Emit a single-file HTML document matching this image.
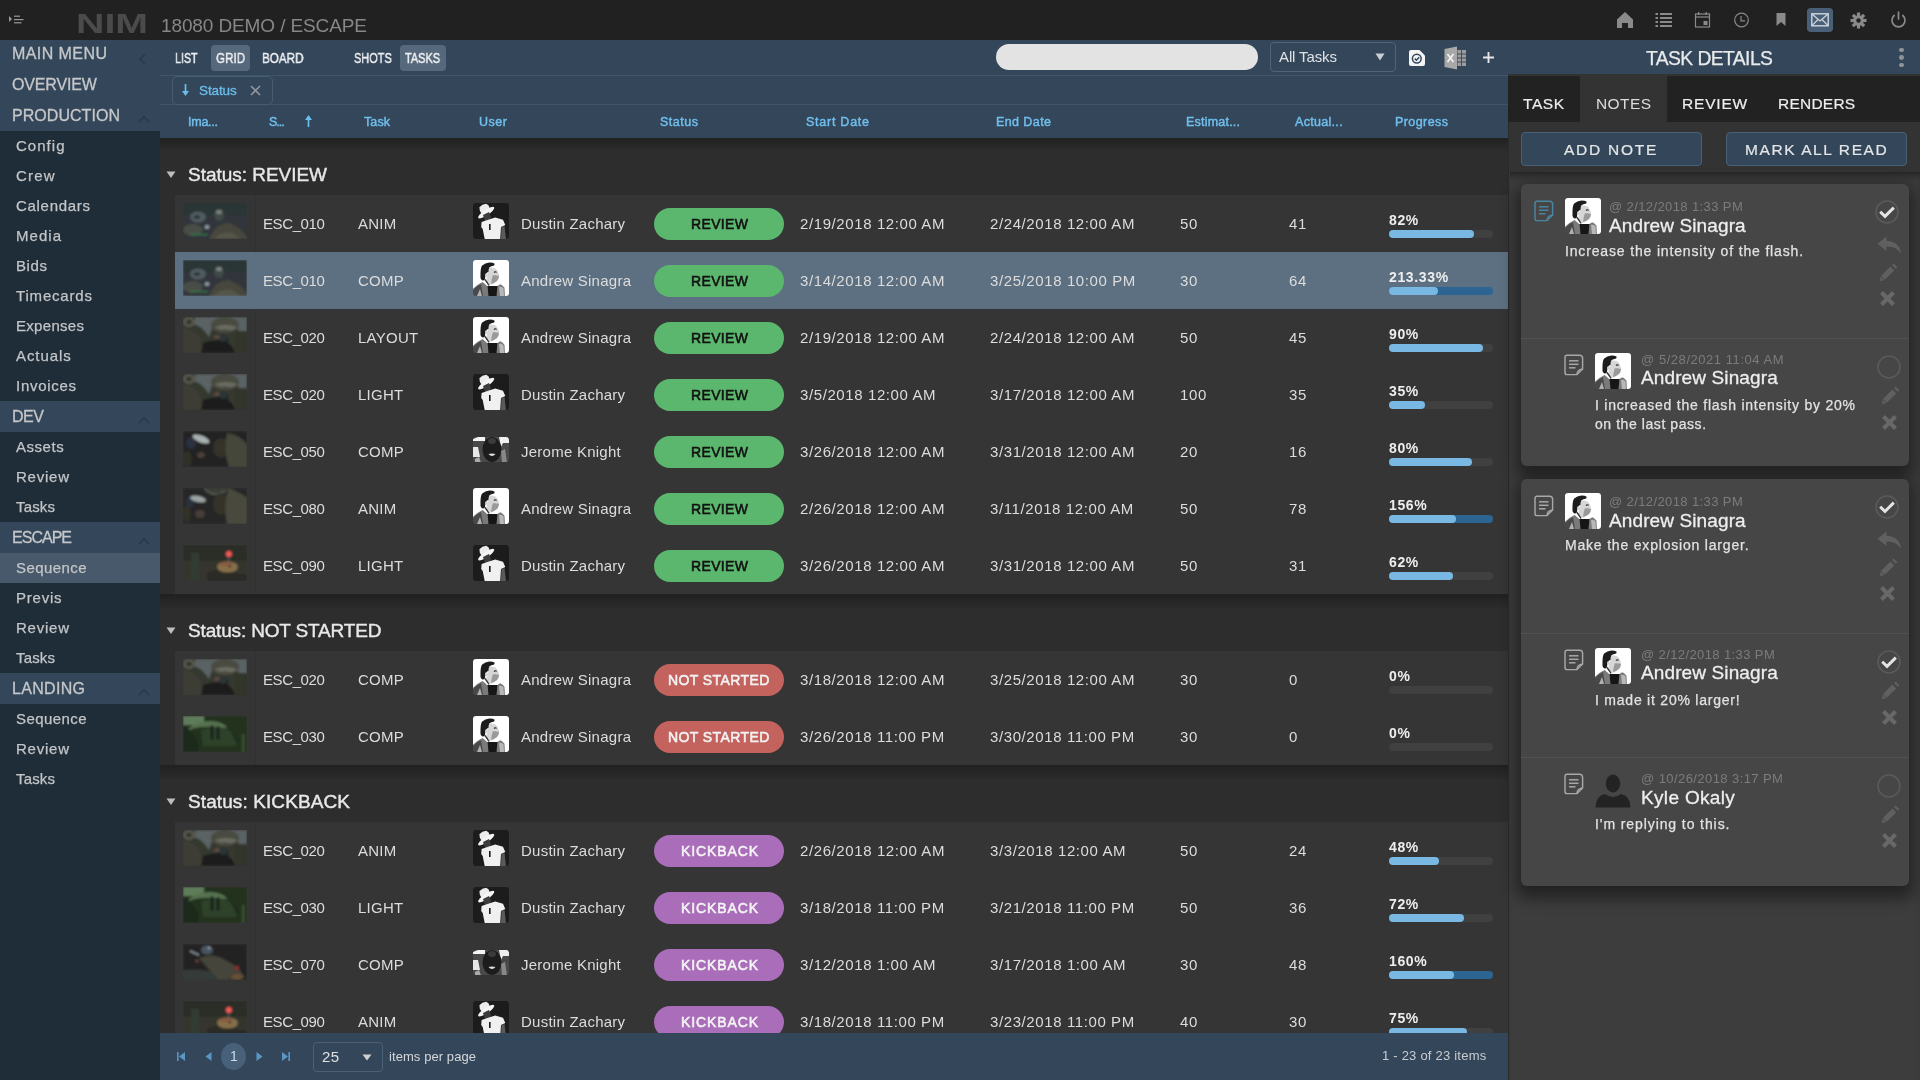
<!DOCTYPE html>
<html><head><meta charset="utf-8"><style>
html,body{margin:0;padding:0;}
body{width:1920px;height:1080px;overflow:hidden;position:relative;background:#2a2a2a;font-family:"Liberation Sans",sans-serif;}
.t{position:absolute;white-space:nowrap;will-change:transform;}
.b{position:absolute;}
</style></head><body>
<div class="b" style="left:0px;top:0px;width:1920px;height:40px;background:#212121;"></div>
<svg class="b" style="left:8px;top:14px;" width="18" height="11" viewBox="0 0 18 11"><path d="M1 2 L4 5 L1 8 Z" fill="#9a9a9a"/><rect x="6" y="1.6" width="6" height="1.2" fill="#9a9a9a"/><rect x="6" y="5" width="9.5" height="1.2" fill="#9a9a9a"/><rect x="6" y="8.2" width="7.5" height="1.2" fill="#9a9a9a"/></svg>
<div class="t" style="left:76px;top:10.2px;font-size:28px;line-height:28px;font-weight:700;color:#4b4b4b;transform-origin:0 0;transform:scale(1.405,1.0);letter-spacing:0px">NIM</div>
<div class="t" style="left:161px;top:15.80px;font-size:19px;line-height:19px;color:#878787;letter-spacing:-0.112px;">18080 DEMO / ESCAPE</div>
<svg class="b" style="left:1616px;top:11px;" width="18" height="18" viewBox="0 0 18 18"><path d="M9 1 L17 8.5 L17 17 L12 17 L12 12 L6 12 L6 17 L1 17 L1 8.5 Z" fill="#8a8a8a"/></svg>
<svg class="b" style="left:1655px;top:12px;" width="18" height="16" viewBox="0 0 18 16"><rect x="0.5" y="1" width="2.5" height="2" fill="#8a8a8a"/><rect x="5" y="1" width="12" height="2" fill="#8a8a8a"/><rect x="0.5" y="5" width="2.5" height="2" fill="#8a8a8a"/><rect x="5" y="5" width="12" height="2" fill="#8a8a8a"/><rect x="0.5" y="9" width="2.5" height="2" fill="#8a8a8a"/><rect x="5" y="9" width="12" height="2" fill="#8a8a8a"/><rect x="0.5" y="13" width="2.5" height="2" fill="#8a8a8a"/><rect x="5" y="13" width="12" height="2" fill="#8a8a8a"/></svg>
<svg class="b" style="left:1694px;top:11px;" width="17" height="17" viewBox="0 0 17 17"><rect x="1.5" y="3" width="14" height="13" fill="none" stroke="#8a8a8a" stroke-width="1.2"/><line x1="1.5" y1="6" x2="15.5" y2="6" stroke="#8a8a8a" stroke-width="1.2"/><rect x="4" y="1" width="1.3" height="3" fill="#8a8a8a"/><rect x="11.5" y="1" width="1.3" height="3" fill="#8a8a8a"/><rect x="9.5" y="10" width="4" height="4" fill="#8a8a8a"/></svg>
<svg class="b" style="left:1733px;top:12px;" width="17" height="17" viewBox="0 0 17 17"><circle cx="8.5" cy="8" r="6.8" fill="none" stroke="#8a8a8a" stroke-width="1.2"/><path d="M8 4 L8 8.8 L12 8.8" fill="none" stroke="#8a8a8a" stroke-width="1.2"/></svg>
<svg class="b" style="left:1776px;top:12px;" width="10" height="15" viewBox="0 0 10 15"><path d="M0.5 1 L9.5 1 L9.5 14 L5 10 L0.5 14 Z" fill="#8a8a8a"/></svg>
<div class="b" style="left:1807px;top:8px;width:26px;height:24px;background:#4a6078;border-radius:4px;"></div>
<svg class="b" style="left:1811px;top:13px;" width="18" height="14" viewBox="0 0 18 14"><rect x="0.8" y="0.8" width="16.4" height="12" fill="none" stroke="#d0d6dc" stroke-width="1.4"/><path d="M1 1 L9 8 L17 1 M1 12.6 L7 6.5 M17 12.6 L11 6.5" fill="none" stroke="#d0d6dc" stroke-width="1.2"/></svg>
<svg class="b" style="left:1850px;top:12px;" width="17" height="17" viewBox="0 0 17 17"><g transform="translate(8.5 8.5)"><circle r="5.2" fill="#8a8a8a"/><rect x="-1.6" y="-8" width="3.2" height="4" fill="#8a8a8a" transform="rotate(0)"/><rect x="-1.6" y="-8" width="3.2" height="4" fill="#8a8a8a" transform="rotate(45)"/><rect x="-1.6" y="-8" width="3.2" height="4" fill="#8a8a8a" transform="rotate(90)"/><rect x="-1.6" y="-8" width="3.2" height="4" fill="#8a8a8a" transform="rotate(135)"/><rect x="-1.6" y="-8" width="3.2" height="4" fill="#8a8a8a" transform="rotate(180)"/><rect x="-1.6" y="-8" width="3.2" height="4" fill="#8a8a8a" transform="rotate(225)"/><rect x="-1.6" y="-8" width="3.2" height="4" fill="#8a8a8a" transform="rotate(270)"/><rect x="-1.6" y="-8" width="3.2" height="4" fill="#8a8a8a" transform="rotate(315)"/><circle r="2.2" fill="#212121"/></g></svg>
<svg class="b" style="left:1890px;top:11px;" width="17" height="18" viewBox="0 0 17 18"><path d="M4.2 4.5 A6.5 6.5 0 1 0 12.8 4.5" fill="none" stroke="#8a8a8a" stroke-width="1.7" stroke-linecap="round"/><line x1="8.5" y1="1" x2="8.5" y2="8" stroke="#8a8a8a" stroke-width="1.7" stroke-linecap="round"/></svg>
<div class="b" style="left:0px;top:40px;width:160px;height:1040px;background:#1f2d39;"></div>
<div class="b" style="left:0px;top:40px;width:160px;height:30px;background:#34475a;"></div>
<div class="t" style="left:12px;top:46.07px;font-size:16px;line-height:16px;color:#c5c7c9;letter-spacing:0.426px;-webkit-text-stroke:0.3px #c5c7c9;">MAIN MENU</div>
<svg class="b" style="left:138px;top:53px;" width="9" height="12" viewBox="0 0 9 12"><path d="M7 1 L2 6 L7 11" fill="none" stroke="#283a4a" stroke-width="1.6"/></svg>
<div class="b" style="left:0px;top:70px;width:160px;height:30px;background:#34475a;"></div>
<div class="t" style="left:12px;top:77.07px;font-size:16px;line-height:16px;color:#c5c7c9;letter-spacing:-0.141px;-webkit-text-stroke:0.3px #c5c7c9;">OVERVIEW</div>
<div class="b" style="left:0px;top:100px;width:160px;height:31px;background:#34475a;"></div>
<div class="t" style="left:12px;top:108.27px;font-size:16px;line-height:16px;color:#c5c7c9;letter-spacing:0.042px;-webkit-text-stroke:0.3px #c5c7c9;">PRODUCTION</div>
<svg class="b" style="left:138px;top:115px;" width="12" height="8" viewBox="0 0 12 8"><path d="M1 7 L6 2 L11 7" fill="none" stroke="#283a4a" stroke-width="1.6"/></svg>
<div class="b" style="left:0px;top:401px;width:160px;height:31px;background:#34475a;"></div>
<div class="t" style="left:12px;top:409.47px;font-size:16px;line-height:16px;color:#c5c7c9;letter-spacing:-0.453px;-webkit-text-stroke:0.3px #c5c7c9;">DEV</div>
<svg class="b" style="left:138px;top:416px;" width="12" height="8" viewBox="0 0 12 8"><path d="M1 7 L6 2 L11 7" fill="none" stroke="#283a4a" stroke-width="1.6"/></svg>
<div class="b" style="left:0px;top:522px;width:160px;height:31px;background:#34475a;"></div>
<div class="t" style="left:12px;top:530.47px;font-size:16px;line-height:16px;color:#c5c7c9;letter-spacing:-0.984px;-webkit-text-stroke:0.3px #c5c7c9;">ESCAPE</div>
<svg class="b" style="left:138px;top:537px;" width="12" height="8" viewBox="0 0 12 8"><path d="M1 7 L6 2 L11 7" fill="none" stroke="#283a4a" stroke-width="1.6"/></svg>
<div class="b" style="left:0px;top:673px;width:160px;height:31px;background:#34475a;"></div>
<div class="t" style="left:12px;top:681.47px;font-size:16px;line-height:16px;color:#c5c7c9;letter-spacing:0.305px;-webkit-text-stroke:0.3px #c5c7c9;">LANDING</div>
<svg class="b" style="left:138px;top:688px;" width="12" height="8" viewBox="0 0 12 8"><path d="M1 7 L6 2 L11 7" fill="none" stroke="#283a4a" stroke-width="1.6"/></svg>
<div class="t" style="left:16px;top:138.13px;font-size:15px;line-height:15px;color:#c3c5c7;letter-spacing:1.028px;-webkit-text-stroke:0.25px #c3c5c7;">Config</div>
<div class="t" style="left:16px;top:168.13px;font-size:15px;line-height:15px;color:#c3c5c7;letter-spacing:1.167px;-webkit-text-stroke:0.25px #c3c5c7;">Crew</div>
<div class="t" style="left:16px;top:198.13px;font-size:15px;line-height:15px;color:#c3c5c7;letter-spacing:0.703px;-webkit-text-stroke:0.25px #c3c5c7;">Calendars</div>
<div class="t" style="left:16px;top:228.13px;font-size:15px;line-height:15px;color:#c3c5c7;letter-spacing:1.035px;-webkit-text-stroke:0.25px #c3c5c7;">Media</div>
<div class="t" style="left:16px;top:258.13px;font-size:15px;line-height:15px;color:#c3c5c7;letter-spacing:0.609px;-webkit-text-stroke:0.25px #c3c5c7;">Bids</div>
<div class="t" style="left:16px;top:288.13px;font-size:15px;line-height:15px;color:#c3c5c7;letter-spacing:0.818px;-webkit-text-stroke:0.25px #c3c5c7;">Timecards</div>
<div class="t" style="left:16px;top:318.13px;font-size:15px;line-height:15px;color:#c3c5c7;letter-spacing:0.304px;-webkit-text-stroke:0.25px #c3c5c7;">Expenses</div>
<div class="t" style="left:16px;top:348.13px;font-size:15px;line-height:15px;color:#c3c5c7;letter-spacing:0.919px;-webkit-text-stroke:0.25px #c3c5c7;">Actuals</div>
<div class="t" style="left:16px;top:378.13px;font-size:15px;line-height:15px;color:#c3c5c7;letter-spacing:0.710px;-webkit-text-stroke:0.25px #c3c5c7;">Invoices</div>
<div class="t" style="left:16px;top:439.13px;font-size:15px;line-height:15px;color:#c3c5c7;letter-spacing:0.537px;-webkit-text-stroke:0.25px #c3c5c7;">Assets</div>
<div class="t" style="left:16px;top:469.13px;font-size:15px;line-height:15px;color:#c3c5c7;letter-spacing:0.766px;-webkit-text-stroke:0.25px #c3c5c7;">Review</div>
<div class="t" style="left:16px;top:499.13px;font-size:15px;line-height:15px;color:#c3c5c7;letter-spacing:0.164px;-webkit-text-stroke:0.25px #c3c5c7;">Tasks</div>
<div class="b" style="left:0px;top:553px;width:160px;height:30px;background:#47596b;"></div>
<div class="t" style="left:16px;top:560.13px;font-size:15px;line-height:15px;color:#c3c5c7;letter-spacing:0.420px;-webkit-text-stroke:0.25px #c3c5c7;">Sequence</div>
<div class="t" style="left:16px;top:590.13px;font-size:15px;line-height:15px;color:#c3c5c7;letter-spacing:0.766px;-webkit-text-stroke:0.25px #c3c5c7;">Previs</div>
<div class="t" style="left:16px;top:620.13px;font-size:15px;line-height:15px;color:#c3c5c7;letter-spacing:0.766px;-webkit-text-stroke:0.25px #c3c5c7;">Review</div>
<div class="t" style="left:16px;top:650.13px;font-size:15px;line-height:15px;color:#c3c5c7;letter-spacing:0.164px;-webkit-text-stroke:0.25px #c3c5c7;">Tasks</div>
<div class="t" style="left:16px;top:711.13px;font-size:15px;line-height:15px;color:#c3c5c7;letter-spacing:0.420px;-webkit-text-stroke:0.25px #c3c5c7;">Sequence</div>
<div class="t" style="left:16px;top:741.13px;font-size:15px;line-height:15px;color:#c3c5c7;letter-spacing:0.766px;-webkit-text-stroke:0.25px #c3c5c7;">Review</div>
<div class="t" style="left:16px;top:771.13px;font-size:15px;line-height:15px;color:#c3c5c7;letter-spacing:0.164px;-webkit-text-stroke:0.25px #c3c5c7;">Tasks</div>
<div class="b" style="left:160px;top:40px;width:1348px;height:98px;background:#34475a;"></div>
<div class="b" style="left:160px;top:75px;width:1348px;height:1px;background:#3f5669;"></div>
<div class="b" style="left:160px;top:104px;width:1348px;height:1px;background:#3f5669;"></div>
<div class="t" style="left:175px;top:51.49px;font-size:14px;line-height:14px;color:#eef0f2;-webkit-text-stroke:0.45px #eef0f2;transform-origin:0 0;transform:scaleX(0.761)">LIST</div>
<div class="b" style="left:211px;top:45px;width:39px;height:26px;background:#56687b;border-radius:4px;"></div>
<div class="t" style="left:215.5px;top:51.49px;font-size:14px;line-height:14px;color:#eef0f2;-webkit-text-stroke:0.45px #eef0f2;transform-origin:0 0;transform:scaleX(0.829)">GRID</div>
<div class="t" style="left:261.7px;top:51.49px;font-size:14px;line-height:14px;color:#eef0f2;-webkit-text-stroke:0.45px #eef0f2;transform-origin:0 0;transform:scaleX(0.833)">BOARD</div>
<div class="t" style="left:353.5px;top:51.49px;font-size:14px;line-height:14px;color:#eef0f2;-webkit-text-stroke:0.45px #eef0f2;transform-origin:0 0;transform:scaleX(0.782)">SHOTS</div>
<div class="b" style="left:400px;top:45px;width:46px;height:26px;background:#56687b;border-radius:4px;"></div>
<div class="t" style="left:405.3px;top:51.49px;font-size:14px;line-height:14px;color:#eef0f2;-webkit-text-stroke:0.45px #eef0f2;transform-origin:0 0;transform:scaleX(0.782)">TASKS</div>
<div class="b" style="left:996px;top:44px;width:262px;height:26px;background:#e3e3e3;border-radius:13px;"></div>
<div class="b" style="left:1270px;top:42px;width:126px;height:30px;background:transparent;border:1px solid #506478;border-radius:4px;box-sizing:border-box;"></div>
<div class="t" style="left:1279px;top:49.13px;font-size:15px;line-height:15px;color:#dfe2e5;letter-spacing:-0.113px;">All Tasks</div>
<svg class="b" style="left:1375px;top:53px;" width="10" height="8" viewBox="0 0 10 8"><path d="M0.5 0.5 L9.5 0.5 L5 7.5 Z" fill="#c8cdd2"/></svg>
<svg class="b" style="left:1409px;top:50px;" width="16" height="16" viewBox="0 0 16 16"><path d="M2 0 L10.5 0 L16 5.5 L16 14 Q16 16 14 16 L2 16 Q0 16 0 14 L0 2 Q0 0 2 0 Z" fill="#f4f4f4"/><circle cx="7.8" cy="8.6" r="4.4" fill="none" stroke="#34475a" stroke-width="1.5"/><path d="M5.8 8.6 L7.4 10.2 L10.2 7.2" fill="none" stroke="#34475a" stroke-width="1.5"/></svg>
<svg class="b" style="left:1444px;top:46px;" width="23" height="24" viewBox="0 0 23 24"><rect x="9" y="4" width="13" height="16" fill="#9c9c9c"/><g stroke="#34475a" stroke-width="0.9"><line x1="13" y1="4" x2="13" y2="20"/><line x1="17.5" y1="4" x2="17.5" y2="20"/><line x1="9" y1="8" x2="22" y2="8"/><line x1="9" y1="12" x2="22" y2="12"/><line x1="9" y1="16" x2="22" y2="16"/></g><path d="M0.5 3 L13 0.5 L13 23.5 L0.5 21 Z" fill="#a8a8a8"/><path d="M3.5 8 L9.5 16 M9.5 8 L3.5 16" stroke="#f0f0f0" stroke-width="1.8"/></svg>
<svg class="b" style="left:1483px;top:52px;" width="11" height="11" viewBox="0 0 11 11"><path d="M5.5 0 L5.5 11 M0 5.5 L11 5.5" stroke="#e6e6e6" stroke-width="1.9"/></svg>
<div class="b" style="left:172px;top:76px;width:101px;height:29px;background:transparent;border:1px solid #465c70;border-radius:5px;box-sizing:border-box;"></div>
<svg class="b" style="left:181px;top:83px;" width="9" height="14" viewBox="0 0 9 14"><path d="M4.5 1 L4.5 9" stroke="#6abdec" stroke-width="1.7"/><path d="M1 8 L8 8 L4.5 13 Z" fill="#6abdec"/></svg>
<div class="t" style="left:199px;top:84.07px;font-size:13.5px;line-height:13.5px;color:#6abdec;letter-spacing:-0.116px;-webkit-text-stroke:0.3px #6abdec;">Status</div>
<svg class="b" style="left:250px;top:85px;" width="11" height="11" viewBox="0 0 11 11"><path d="M1 1 L10 10 M10 1 L1 10" stroke="#8e959c" stroke-width="1.6"/></svg>
<div class="t" style="left:187.5px;top:116.33px;font-size:12.5px;line-height:12.5px;color:#70bfee;letter-spacing:-0.247px;-webkit-text-stroke:0.45px #70bfee;">Ima...</div>
<div class="t" style="left:269px;top:116.33px;font-size:12.5px;line-height:12.5px;color:#70bfee;letter-spacing:-1.017px;-webkit-text-stroke:0.45px #70bfee;">S...</div>
<div class="t" style="left:364px;top:116.33px;font-size:12.5px;line-height:12.5px;color:#70bfee;letter-spacing:0.099px;-webkit-text-stroke:0.45px #70bfee;">Task</div>
<div class="t" style="left:479px;top:116.33px;font-size:12.5px;line-height:12.5px;color:#70bfee;letter-spacing:0.536px;-webkit-text-stroke:0.45px #70bfee;">User</div>
<div class="t" style="left:660px;top:116.33px;font-size:12.5px;line-height:12.5px;color:#70bfee;letter-spacing:0.512px;-webkit-text-stroke:0.45px #70bfee;">Status</div>
<div class="t" style="left:806px;top:116.33px;font-size:12.5px;line-height:12.5px;color:#70bfee;letter-spacing:0.748px;-webkit-text-stroke:0.45px #70bfee;">Start Date</div>
<div class="t" style="left:996px;top:116.33px;font-size:12.5px;line-height:12.5px;color:#70bfee;letter-spacing:0.411px;-webkit-text-stroke:0.45px #70bfee;">End Date</div>
<div class="t" style="left:1186px;top:116.33px;font-size:12.5px;line-height:12.5px;color:#70bfee;letter-spacing:0.214px;-webkit-text-stroke:0.45px #70bfee;">Estimat...</div>
<div class="t" style="left:1294.7px;top:116.33px;font-size:12.5px;line-height:12.5px;color:#70bfee;letter-spacing:0.305px;-webkit-text-stroke:0.45px #70bfee;">Actual...</div>
<div class="t" style="left:1395px;top:116.33px;font-size:12.5px;line-height:12.5px;color:#70bfee;letter-spacing:0.426px;-webkit-text-stroke:0.45px #70bfee;">Progress</div>
<svg class="b" style="left:304px;top:115px;" width="9" height="13" viewBox="0 0 9 13"><path d="M4.5 12 L4.5 4" stroke="#6abdec" stroke-width="1.7"/><path d="M1 5 L8 5 L4.5 0 Z" fill="#6abdec"/></svg>
<div class="b" style="left:160px;top:138px;width:1348px;height:895px;background:#2d2d2d;"></div>
<div class="b" style="left:160px;top:138px;width:1348px;height:14px;background:linear-gradient(#212121,rgba(45,45,45,0));"></div>
<svg class="b" style="left:166px;top:171px;" width="10" height="8" viewBox="0 0 10 8"><path d="M0.5 0.5 L9.5 0.5 L5 7 Z" fill="#bdbdbd"/></svg>
<div class="t" style="left:188px;top:165.00px;font-size:19px;line-height:19px;color:#e8e8e8;letter-spacing:-0.029px;-webkit-text-stroke:0.4px #e8e8e8;">Status: REVIEW</div>
<div class="b" style="left:175px;top:195px;width:1333px;height:57px;background:#353535;"></div>
<div class="b" style="left:255px;top:195px;width:1px;height:57px;background:#313131;"></div>
<svg class="b" style="left:183px;top:203px;" width="64" height="36" viewBox="0 0 64 36"><defs><filter id="bl1" x="0" y="0" width="1" height="1"><feGaussianBlur stdDeviation="0.9"/></filter></defs><g filter="url(#bl1)"><rect width="64" height="36" fill="#30363a"/><rect width="64" height="12" fill="#2c3435"/><ellipse cx="15" cy="14" rx="8" ry="5.5" fill="#4f5c60"/><ellipse cx="14" cy="14" rx="3" ry="1.5" fill="#222a2c"/><ellipse cx="36" cy="12" rx="5" ry="6" fill="#3f4846"/><ellipse cx="36" cy="9" rx="3" ry="2" fill="#7a8482"/><ellipse cx="10" cy="27" rx="10" ry="6" fill="#4a4d46"/><path d="M26 36 Q32 20 46 20 Q58 24 64 34 L64 36 Z" fill="#46463c"/><path d="M30 36 Q38 28 50 30 L58 36 Z" fill="#55554a"/><ellipse cx="24" cy="24" rx="2.5" ry="2" fill="#8a9aa0"/><rect x="7" y="31" width="18" height="1.2" fill="#2a7a4a"/></g></svg>
<div class="t" style="left:263px;top:216.43px;font-size:15px;line-height:15px;color:#dcdcdc;letter-spacing:-0.4px;">ESC_010</div>
<div class="t" style="left:358px;top:216.43px;font-size:15px;line-height:15px;color:#dcdcdc;letter-spacing:0.25px;">ANIM</div>
<svg class="b" style="left:473px;top:203px;border-radius:3px;overflow:hidden" width="36" height="36" viewBox="0 0 36 36"><defs><filter id="av1"><feGaussianBlur stdDeviation="0.35"/></filter></defs><g filter="url(#av1)"><rect width="36" height="36" fill="#1c1c1c"/><path d="M6.4 4.2 Q9 1.2 13.2 0.8 Q16 2 16.6 4.8 L15.4 8.6 L8.6 10.6 Q6.2 7.5 6.4 4.2 Z" fill="#ececec"/><ellipse cx="13.2" cy="9.6" rx="9.6" ry="2.7" fill="#f4f4f4" transform="rotate(-34 13.2 9.6)"/><path d="M10 12 L16 9 L18 14 L16 19 L12 18 Z" fill="#3c3c3c"/><path d="M8.6 19 L15.2 16.7 L22.2 14.4 L30 16.7 L32.3 22.1 L28 24.1 L27.2 36 L11.7 36 L9.7 26 L8.2 24.1 Z" fill="#f0f0f0"/><rect x="16" y="21" width="1.6" height="6" fill="#1a1a1a"/><path d="M28.5 24 L31.5 23 L33 36 L28 36 Z" fill="#5a5a5a"/></g></svg>
<div class="t" style="left:521px;top:216.43px;font-size:15px;line-height:15px;color:#dcdcdc;letter-spacing:0.25px;">Dustin Zachary</div>
<div class="b" style="left:654px;top:208px;width:130px;height:32px;background:#5bb66e;border-radius:16px;"></div>
<div class="t" style="left:690.5px;top:216.99px;font-size:14px;line-height:14px;color:#111111;letter-spacing:0.350px;-webkit-text-stroke:0.55px #111111;">REVIEW</div>
<div class="t" style="left:800px;top:216.43px;font-size:15px;line-height:15px;color:#dcdcdc;letter-spacing:0.6px;">2/19/2018 12:00 AM</div>
<div class="t" style="left:990px;top:216.43px;font-size:15px;line-height:15px;color:#dcdcdc;letter-spacing:0.6px;">2/24/2018 12:00 AM</div>
<div class="t" style="left:1179.8px;top:216.43px;font-size:15px;line-height:15px;color:#dcdcdc;letter-spacing:0.6px;">50</div>
<div class="t" style="left:1288.8px;top:216.43px;font-size:15px;line-height:15px;color:#dcdcdc;letter-spacing:0.6px;">41</div>
<div class="t" style="left:1389px;top:212.79px;font-size:14px;line-height:14px;color:#eeeeee;font-weight:700;letter-spacing:0.65px;">82%</div>
<div class="b" style="left:1389px;top:230px;width:104px;height:8px;background:#404040;border-radius:4px;"></div>
<div class="b" style="left:1389px;top:230px;width:85px;height:8px;background:#79b8e2;border-radius:4px;"></div>
<div class="b" style="left:175px;top:252px;width:1333px;height:57px;background:#5d7082;"></div>
<svg class="b" style="left:183px;top:260px;" width="64" height="36" viewBox="0 0 64 36"><defs><filter id="bl2" x="0" y="0" width="1" height="1"><feGaussianBlur stdDeviation="0.9"/></filter></defs><g filter="url(#bl2)"><rect width="64" height="36" fill="#30363a"/><rect width="64" height="12" fill="#2c3435"/><ellipse cx="15" cy="14" rx="8" ry="5.5" fill="#4f5c60"/><ellipse cx="14" cy="14" rx="3" ry="1.5" fill="#222a2c"/><ellipse cx="36" cy="12" rx="5" ry="6" fill="#3f4846"/><ellipse cx="36" cy="9" rx="3" ry="2" fill="#7a8482"/><ellipse cx="10" cy="27" rx="10" ry="6" fill="#4a4d46"/><path d="M26 36 Q32 20 46 20 Q58 24 64 34 L64 36 Z" fill="#46463c"/><path d="M30 36 Q38 28 50 30 L58 36 Z" fill="#55554a"/><ellipse cx="24" cy="24" rx="2.5" ry="2" fill="#8a9aa0"/><rect x="7" y="31" width="18" height="1.2" fill="#2a7a4a"/></g></svg>
<div class="t" style="left:263px;top:273.43px;font-size:15px;line-height:15px;color:#dcdcdc;letter-spacing:-0.4px;">ESC_010</div>
<div class="t" style="left:358px;top:273.43px;font-size:15px;line-height:15px;color:#dcdcdc;letter-spacing:0.25px;">COMP</div>
<svg class="b" style="left:473px;top:260px;border-radius:3px;overflow:hidden" width="36" height="36" viewBox="0 0 36 36"><defs><filter id="av2"><feGaussianBlur stdDeviation="0.35"/></filter></defs><g filter="url(#av2)"><rect width="36" height="36" fill="#ffffff"/><path d="M16.4 7.3 Q21 7.5 23 8.7 Q25.5 12 26.2 15.3 Q26 17.5 25.3 18.9 Q24 21 21.7 22.4 Q19 24.5 16.4 25.1 Q13.5 23.5 12.8 21.6 Z" fill="#d6d6d6"/><path d="M19.9 15.3 Q23 14.8 26 16 Q25.8 19 24 21 Q21 23.5 18 24 Q18.5 19 19.9 15.3 Z" fill="#9a9a9a"/><path d="M21 12.5 Q22.5 11 23.5 12.5" fill="none" stroke="#222" stroke-width="1.2"/><path d="M7.5 12.7 Q7.8 7 9.2 5.6 Q12 2.6 16.4 2.4 Q20 2.4 21.7 3.8 L21.2 5.6 Q18 6.2 16.4 7.3 Q15.3 9.5 15.5 11.8 Q13.5 12.5 12.8 14.4 Q12.2 16.5 11.9 18.9 L10.1 20.7 Q8 20 7.5 18 Z" fill="#1c1c1c"/><ellipse cx="13.3" cy="15" rx="1.3" ry="1.8" fill="#cfcfcf"/><path d="M11.5 19 Q14 22 16 25.5" fill="none" stroke="#333" stroke-width="1.3"/><path d="M0 28.7 Q5 24 9.6 22 Q12 24 14.1 26 L24.4 26 Q26 25 27.5 24.2 Q30 25.5 31.5 27.8 L31.9 36 L0 36 Z" fill="#7a7a7a"/><path d="M0 30 Q4 26 8 24 L10 36 L0 36 Z" fill="#4a4a4a"/><path d="M4 36 L7 29 L9 36 Z" fill="#b0b0b0"/><path d="M26 27 Q29 26 30.5 28.5 L31 36 L27 36 Z" fill="#b8b8b8"/><path d="M14.6 26 L24.4 26 L23.5 36 L15.5 36 Z" fill="#141414"/></g></svg>
<div class="t" style="left:521px;top:273.43px;font-size:15px;line-height:15px;color:#dcdcdc;letter-spacing:0.25px;">Andrew Sinagra</div>
<div class="b" style="left:654px;top:265px;width:130px;height:32px;background:#5bb66e;border-radius:16px;"></div>
<div class="t" style="left:690.5px;top:273.99px;font-size:14px;line-height:14px;color:#111111;letter-spacing:0.350px;-webkit-text-stroke:0.55px #111111;">REVIEW</div>
<div class="t" style="left:800px;top:273.43px;font-size:15px;line-height:15px;color:#dcdcdc;letter-spacing:0.6px;">3/14/2018 12:00 AM</div>
<div class="t" style="left:990px;top:273.43px;font-size:15px;line-height:15px;color:#dcdcdc;letter-spacing:0.6px;">3/25/2018 10:00 PM</div>
<div class="t" style="left:1179.8px;top:273.43px;font-size:15px;line-height:15px;color:#dcdcdc;letter-spacing:0.6px;">30</div>
<div class="t" style="left:1288.8px;top:273.43px;font-size:15px;line-height:15px;color:#dcdcdc;letter-spacing:0.6px;">64</div>
<div class="t" style="left:1389px;top:269.79px;font-size:14px;line-height:14px;color:#eeeeee;font-weight:700;letter-spacing:0.65px;">213.33%</div>
<div class="b" style="left:1389px;top:287px;width:104px;height:8px;background:#2c6592;border-radius:4px;"></div>
<div class="b" style="left:1389px;top:287px;width:49px;height:8px;background:#79b8e2;border-radius:4px;"></div>
<div class="b" style="left:175px;top:309px;width:1333px;height:57px;background:#353535;"></div>
<div class="b" style="left:255px;top:309px;width:1px;height:57px;background:#313131;"></div>
<svg class="b" style="left:183px;top:317px;" width="64" height="36" viewBox="0 0 64 36"><defs><filter id="bl3" x="0" y="0" width="1" height="1"><feGaussianBlur stdDeviation="0.9"/></filter></defs><g filter="url(#bl3)"><rect width="64" height="36" fill="#36372f"/><path d="M12 0 L64 0 L64 14 L56 14 Q48 2 36 4 Q30 6 28 14 L26 20 Q18 8 12 8 Z" fill="#5a6264"/><ellipse cx="42" cy="8" rx="14" ry="8" fill="#4a4b40"/><path d="M32 10 Q42 6 54 10 Q50 15 42 12 Q36 14 32 10 Z" fill="#6a6c62"/><ellipse cx="6" cy="5" rx="6" ry="5" fill="#5a5a50"/><ellipse cx="6" cy="5" rx="3" ry="2.5" fill="#34352e"/><path d="M0 10 Q10 12 18 22 L20 36 L0 36 Z" fill="#3c3d34"/><path d="M18 36 L20 26 Q30 22 42 24 Q50 28 52 36 Z" fill="#1e1e1e"/><circle cx="40" cy="23" r="5" fill="#1a1c1e"/><circle cx="40" cy="21" r="4" fill="#2a3434"/><ellipse cx="34" cy="20" rx="3" ry="2" fill="#5a4a40"/><path d="M52 14 Q62 14 64 16 L64 36 L52 36 Z" fill="#33342c"/></g></svg>
<div class="t" style="left:263px;top:330.43px;font-size:15px;line-height:15px;color:#dcdcdc;letter-spacing:-0.4px;">ESC_020</div>
<div class="t" style="left:358px;top:330.43px;font-size:15px;line-height:15px;color:#dcdcdc;letter-spacing:0.25px;">LAYOUT</div>
<svg class="b" style="left:473px;top:317px;border-radius:3px;overflow:hidden" width="36" height="36" viewBox="0 0 36 36"><defs><filter id="av3"><feGaussianBlur stdDeviation="0.35"/></filter></defs><g filter="url(#av3)"><rect width="36" height="36" fill="#ffffff"/><path d="M16.4 7.3 Q21 7.5 23 8.7 Q25.5 12 26.2 15.3 Q26 17.5 25.3 18.9 Q24 21 21.7 22.4 Q19 24.5 16.4 25.1 Q13.5 23.5 12.8 21.6 Z" fill="#d6d6d6"/><path d="M19.9 15.3 Q23 14.8 26 16 Q25.8 19 24 21 Q21 23.5 18 24 Q18.5 19 19.9 15.3 Z" fill="#9a9a9a"/><path d="M21 12.5 Q22.5 11 23.5 12.5" fill="none" stroke="#222" stroke-width="1.2"/><path d="M7.5 12.7 Q7.8 7 9.2 5.6 Q12 2.6 16.4 2.4 Q20 2.4 21.7 3.8 L21.2 5.6 Q18 6.2 16.4 7.3 Q15.3 9.5 15.5 11.8 Q13.5 12.5 12.8 14.4 Q12.2 16.5 11.9 18.9 L10.1 20.7 Q8 20 7.5 18 Z" fill="#1c1c1c"/><ellipse cx="13.3" cy="15" rx="1.3" ry="1.8" fill="#cfcfcf"/><path d="M11.5 19 Q14 22 16 25.5" fill="none" stroke="#333" stroke-width="1.3"/><path d="M0 28.7 Q5 24 9.6 22 Q12 24 14.1 26 L24.4 26 Q26 25 27.5 24.2 Q30 25.5 31.5 27.8 L31.9 36 L0 36 Z" fill="#7a7a7a"/><path d="M0 30 Q4 26 8 24 L10 36 L0 36 Z" fill="#4a4a4a"/><path d="M4 36 L7 29 L9 36 Z" fill="#b0b0b0"/><path d="M26 27 Q29 26 30.5 28.5 L31 36 L27 36 Z" fill="#b8b8b8"/><path d="M14.6 26 L24.4 26 L23.5 36 L15.5 36 Z" fill="#141414"/></g></svg>
<div class="t" style="left:521px;top:330.43px;font-size:15px;line-height:15px;color:#dcdcdc;letter-spacing:0.25px;">Andrew Sinagra</div>
<div class="b" style="left:654px;top:322px;width:130px;height:32px;background:#5bb66e;border-radius:16px;"></div>
<div class="t" style="left:690.5px;top:330.99px;font-size:14px;line-height:14px;color:#111111;letter-spacing:0.350px;-webkit-text-stroke:0.55px #111111;">REVIEW</div>
<div class="t" style="left:800px;top:330.43px;font-size:15px;line-height:15px;color:#dcdcdc;letter-spacing:0.6px;">2/19/2018 12:00 AM</div>
<div class="t" style="left:990px;top:330.43px;font-size:15px;line-height:15px;color:#dcdcdc;letter-spacing:0.6px;">2/24/2018 12:00 AM</div>
<div class="t" style="left:1179.8px;top:330.43px;font-size:15px;line-height:15px;color:#dcdcdc;letter-spacing:0.6px;">50</div>
<div class="t" style="left:1288.8px;top:330.43px;font-size:15px;line-height:15px;color:#dcdcdc;letter-spacing:0.6px;">45</div>
<div class="t" style="left:1389px;top:326.79px;font-size:14px;line-height:14px;color:#eeeeee;font-weight:700;letter-spacing:0.65px;">90%</div>
<div class="b" style="left:1389px;top:344px;width:104px;height:8px;background:#404040;border-radius:4px;"></div>
<div class="b" style="left:1389px;top:344px;width:94px;height:8px;background:#79b8e2;border-radius:4px;"></div>
<div class="b" style="left:175px;top:366px;width:1333px;height:57px;background:#353535;"></div>
<div class="b" style="left:255px;top:366px;width:1px;height:57px;background:#313131;"></div>
<svg class="b" style="left:183px;top:374px;" width="64" height="36" viewBox="0 0 64 36"><defs><filter id="bl4" x="0" y="0" width="1" height="1"><feGaussianBlur stdDeviation="0.9"/></filter></defs><g filter="url(#bl4)"><rect width="64" height="36" fill="#36372f"/><path d="M12 0 L64 0 L64 14 L56 14 Q48 2 36 4 Q30 6 28 14 L26 20 Q18 8 12 8 Z" fill="#5a6264"/><ellipse cx="42" cy="8" rx="14" ry="8" fill="#4a4b40"/><path d="M32 10 Q42 6 54 10 Q50 15 42 12 Q36 14 32 10 Z" fill="#6a6c62"/><ellipse cx="6" cy="5" rx="6" ry="5" fill="#5a5a50"/><ellipse cx="6" cy="5" rx="3" ry="2.5" fill="#34352e"/><path d="M0 10 Q10 12 18 22 L20 36 L0 36 Z" fill="#3c3d34"/><path d="M18 36 L20 26 Q30 22 42 24 Q50 28 52 36 Z" fill="#1e1e1e"/><circle cx="40" cy="23" r="5" fill="#1a1c1e"/><circle cx="40" cy="21" r="4" fill="#2a3434"/><ellipse cx="34" cy="20" rx="3" ry="2" fill="#5a4a40"/><path d="M52 14 Q62 14 64 16 L64 36 L52 36 Z" fill="#33342c"/></g></svg>
<div class="t" style="left:263px;top:387.43px;font-size:15px;line-height:15px;color:#dcdcdc;letter-spacing:-0.4px;">ESC_020</div>
<div class="t" style="left:358px;top:387.43px;font-size:15px;line-height:15px;color:#dcdcdc;letter-spacing:0.25px;">LIGHT</div>
<svg class="b" style="left:473px;top:374px;border-radius:3px;overflow:hidden" width="36" height="36" viewBox="0 0 36 36"><defs><filter id="av4"><feGaussianBlur stdDeviation="0.35"/></filter></defs><g filter="url(#av4)"><rect width="36" height="36" fill="#1c1c1c"/><path d="M6.4 4.2 Q9 1.2 13.2 0.8 Q16 2 16.6 4.8 L15.4 8.6 L8.6 10.6 Q6.2 7.5 6.4 4.2 Z" fill="#ececec"/><ellipse cx="13.2" cy="9.6" rx="9.6" ry="2.7" fill="#f4f4f4" transform="rotate(-34 13.2 9.6)"/><path d="M10 12 L16 9 L18 14 L16 19 L12 18 Z" fill="#3c3c3c"/><path d="M8.6 19 L15.2 16.7 L22.2 14.4 L30 16.7 L32.3 22.1 L28 24.1 L27.2 36 L11.7 36 L9.7 26 L8.2 24.1 Z" fill="#f0f0f0"/><rect x="16" y="21" width="1.6" height="6" fill="#1a1a1a"/><path d="M28.5 24 L31.5 23 L33 36 L28 36 Z" fill="#5a5a5a"/></g></svg>
<div class="t" style="left:521px;top:387.43px;font-size:15px;line-height:15px;color:#dcdcdc;letter-spacing:0.25px;">Dustin Zachary</div>
<div class="b" style="left:654px;top:379px;width:130px;height:32px;background:#5bb66e;border-radius:16px;"></div>
<div class="t" style="left:690.5px;top:387.99px;font-size:14px;line-height:14px;color:#111111;letter-spacing:0.350px;-webkit-text-stroke:0.55px #111111;">REVIEW</div>
<div class="t" style="left:800px;top:387.43px;font-size:15px;line-height:15px;color:#dcdcdc;letter-spacing:0.6px;">3/5/2018 12:00 AM</div>
<div class="t" style="left:990px;top:387.43px;font-size:15px;line-height:15px;color:#dcdcdc;letter-spacing:0.6px;">3/17/2018 12:00 AM</div>
<div class="t" style="left:1179.8px;top:387.43px;font-size:15px;line-height:15px;color:#dcdcdc;letter-spacing:0.6px;">100</div>
<div class="t" style="left:1288.8px;top:387.43px;font-size:15px;line-height:15px;color:#dcdcdc;letter-spacing:0.6px;">35</div>
<div class="t" style="left:1389px;top:383.79px;font-size:14px;line-height:14px;color:#eeeeee;font-weight:700;letter-spacing:0.65px;">35%</div>
<div class="b" style="left:1389px;top:401px;width:104px;height:8px;background:#404040;border-radius:4px;"></div>
<div class="b" style="left:1389px;top:401px;width:36px;height:8px;background:#79b8e2;border-radius:4px;"></div>
<div class="b" style="left:175px;top:423px;width:1333px;height:57px;background:#353535;"></div>
<div class="b" style="left:255px;top:423px;width:1px;height:57px;background:#313131;"></div>
<svg class="b" style="left:183px;top:431px;" width="64" height="36" viewBox="0 0 64 36"><defs><filter id="bl5" x="0" y="0" width="1" height="1"><feGaussianBlur stdDeviation="0.9"/></filter></defs><g filter="url(#bl5)"><rect width="64" height="36" fill="#242423"/><ellipse cx="8" cy="12" rx="5" ry="6" fill="#2a3040"/><ellipse cx="18" cy="8" rx="9" ry="3.4" fill="#a8b2b0" transform="rotate(22 18 8)"/><ellipse cx="38" cy="17" rx="8" ry="10" fill="#35302b"/><path d="M44 2 Q58 4 64 14 L64 36 L46 36 Q40 20 44 2 Z" fill="#45463a"/><ellipse cx="18" cy="24" rx="4" ry="3" fill="#4a3e3a"/><ellipse cx="4" cy="28" rx="5" ry="8" fill="#2e3028"/></g></svg>
<div class="t" style="left:263px;top:444.43px;font-size:15px;line-height:15px;color:#dcdcdc;letter-spacing:-0.4px;">ESC_050</div>
<div class="t" style="left:358px;top:444.43px;font-size:15px;line-height:15px;color:#dcdcdc;letter-spacing:0.25px;">COMP</div>
<svg class="b" style="left:473px;top:436.6px;border-radius:3px;overflow:hidden" width="36" height="25.4" viewBox="0 0 36 25.4"><defs><filter id="av5"><feGaussianBlur stdDeviation="0.35"/></filter></defs><g filter="url(#av5)"><rect width="36" height="25.4" fill="#4a4a4a"/><path d="M0 2 L5 0 L12 0 L12 4 L0 4 Z" fill="#f4f4f4"/><path d="M26 0 L35 0 L36 2 L36 6 L30 6 L28 10 Z" fill="#f0f0f0"/><path d="M0 10 L5 10 L7 20 L0 20 Z" fill="#e8e8e8"/><ellipse cx="19" cy="12.5" rx="9.5" ry="12.5" fill="#1e1e1e"/><ellipse cx="19" cy="4" rx="4" ry="3" fill="#3a3a3a"/><path d="M15.5 17 Q19 16 22.5 17 Q19 21 15.5 17 Z" fill="#e0e0e0"/><path d="M28 14 L32 12 L34 25.4 L29 25.4 Z" fill="#888"/><path d="M2 22 L6 20 L8 25.4 L2 25.4 Z" fill="#aaa"/></g></svg>
<div class="t" style="left:521px;top:444.43px;font-size:15px;line-height:15px;color:#dcdcdc;letter-spacing:0.25px;">Jerome Knight</div>
<div class="b" style="left:654px;top:436px;width:130px;height:32px;background:#5bb66e;border-radius:16px;"></div>
<div class="t" style="left:690.5px;top:444.99px;font-size:14px;line-height:14px;color:#111111;letter-spacing:0.350px;-webkit-text-stroke:0.55px #111111;">REVIEW</div>
<div class="t" style="left:800px;top:444.43px;font-size:15px;line-height:15px;color:#dcdcdc;letter-spacing:0.6px;">3/26/2018 12:00 AM</div>
<div class="t" style="left:990px;top:444.43px;font-size:15px;line-height:15px;color:#dcdcdc;letter-spacing:0.6px;">3/31/2018 12:00 AM</div>
<div class="t" style="left:1179.8px;top:444.43px;font-size:15px;line-height:15px;color:#dcdcdc;letter-spacing:0.6px;">20</div>
<div class="t" style="left:1288.8px;top:444.43px;font-size:15px;line-height:15px;color:#dcdcdc;letter-spacing:0.6px;">16</div>
<div class="t" style="left:1389px;top:440.79px;font-size:14px;line-height:14px;color:#eeeeee;font-weight:700;letter-spacing:0.65px;">80%</div>
<div class="b" style="left:1389px;top:458px;width:104px;height:8px;background:#404040;border-radius:4px;"></div>
<div class="b" style="left:1389px;top:458px;width:83px;height:8px;background:#79b8e2;border-radius:4px;"></div>
<div class="b" style="left:175px;top:480px;width:1333px;height:57px;background:#353535;"></div>
<div class="b" style="left:255px;top:480px;width:1px;height:57px;background:#313131;"></div>
<svg class="b" style="left:183px;top:488px;" width="64" height="36" viewBox="0 0 64 36"><defs><filter id="bl6" x="0" y="0" width="1" height="1"><feGaussianBlur stdDeviation="0.9"/></filter></defs><g filter="url(#bl6)"><rect width="64" height="36" fill="#262726"/><path d="M20 0 Q30 12 44 4 L48 0 Z" fill="#3a3e36"/><path d="M22 1 Q30 10 42 3" fill="none" stroke="#5a6058" stroke-width="1.2"/><ellipse cx="7" cy="14" rx="4" ry="6" fill="#2a3040"/><ellipse cx="15" cy="11" rx="8" ry="3" fill="#9aa4a2" transform="rotate(12 15 11)"/><ellipse cx="38" cy="16" rx="8" ry="11" fill="#35302b"/><path d="M46 0 Q60 6 64 10 L64 36 L44 36 Q40 16 46 0 Z" fill="#4a4a3c"/><ellipse cx="17" cy="26" rx="5" ry="4" fill="#4a3e3a"/><ellipse cx="4" cy="26" rx="4" ry="9" fill="#303028"/></g></svg>
<div class="t" style="left:263px;top:501.43px;font-size:15px;line-height:15px;color:#dcdcdc;letter-spacing:-0.4px;">ESC_080</div>
<div class="t" style="left:358px;top:501.43px;font-size:15px;line-height:15px;color:#dcdcdc;letter-spacing:0.25px;">ANIM</div>
<svg class="b" style="left:473px;top:488px;border-radius:3px;overflow:hidden" width="36" height="36" viewBox="0 0 36 36"><defs><filter id="av6"><feGaussianBlur stdDeviation="0.35"/></filter></defs><g filter="url(#av6)"><rect width="36" height="36" fill="#ffffff"/><path d="M16.4 7.3 Q21 7.5 23 8.7 Q25.5 12 26.2 15.3 Q26 17.5 25.3 18.9 Q24 21 21.7 22.4 Q19 24.5 16.4 25.1 Q13.5 23.5 12.8 21.6 Z" fill="#d6d6d6"/><path d="M19.9 15.3 Q23 14.8 26 16 Q25.8 19 24 21 Q21 23.5 18 24 Q18.5 19 19.9 15.3 Z" fill="#9a9a9a"/><path d="M21 12.5 Q22.5 11 23.5 12.5" fill="none" stroke="#222" stroke-width="1.2"/><path d="M7.5 12.7 Q7.8 7 9.2 5.6 Q12 2.6 16.4 2.4 Q20 2.4 21.7 3.8 L21.2 5.6 Q18 6.2 16.4 7.3 Q15.3 9.5 15.5 11.8 Q13.5 12.5 12.8 14.4 Q12.2 16.5 11.9 18.9 L10.1 20.7 Q8 20 7.5 18 Z" fill="#1c1c1c"/><ellipse cx="13.3" cy="15" rx="1.3" ry="1.8" fill="#cfcfcf"/><path d="M11.5 19 Q14 22 16 25.5" fill="none" stroke="#333" stroke-width="1.3"/><path d="M0 28.7 Q5 24 9.6 22 Q12 24 14.1 26 L24.4 26 Q26 25 27.5 24.2 Q30 25.5 31.5 27.8 L31.9 36 L0 36 Z" fill="#7a7a7a"/><path d="M0 30 Q4 26 8 24 L10 36 L0 36 Z" fill="#4a4a4a"/><path d="M4 36 L7 29 L9 36 Z" fill="#b0b0b0"/><path d="M26 27 Q29 26 30.5 28.5 L31 36 L27 36 Z" fill="#b8b8b8"/><path d="M14.6 26 L24.4 26 L23.5 36 L15.5 36 Z" fill="#141414"/></g></svg>
<div class="t" style="left:521px;top:501.43px;font-size:15px;line-height:15px;color:#dcdcdc;letter-spacing:0.25px;">Andrew Sinagra</div>
<div class="b" style="left:654px;top:493px;width:130px;height:32px;background:#5bb66e;border-radius:16px;"></div>
<div class="t" style="left:690.5px;top:501.99px;font-size:14px;line-height:14px;color:#111111;letter-spacing:0.350px;-webkit-text-stroke:0.55px #111111;">REVIEW</div>
<div class="t" style="left:800px;top:501.43px;font-size:15px;line-height:15px;color:#dcdcdc;letter-spacing:0.6px;">2/26/2018 12:00 AM</div>
<div class="t" style="left:990px;top:501.43px;font-size:15px;line-height:15px;color:#dcdcdc;letter-spacing:0.6px;">3/11/2018 12:00 AM</div>
<div class="t" style="left:1179.8px;top:501.43px;font-size:15px;line-height:15px;color:#dcdcdc;letter-spacing:0.6px;">50</div>
<div class="t" style="left:1288.8px;top:501.43px;font-size:15px;line-height:15px;color:#dcdcdc;letter-spacing:0.6px;">78</div>
<div class="t" style="left:1389px;top:497.79px;font-size:14px;line-height:14px;color:#eeeeee;font-weight:700;letter-spacing:0.65px;">156%</div>
<div class="b" style="left:1389px;top:515px;width:104px;height:8px;background:#2c6592;border-radius:4px;"></div>
<div class="b" style="left:1389px;top:515px;width:67px;height:8px;background:#79b8e2;border-radius:4px;"></div>
<div class="b" style="left:175px;top:537px;width:1333px;height:57px;background:#353535;"></div>
<div class="b" style="left:255px;top:537px;width:1px;height:57px;background:#313131;"></div>
<svg class="b" style="left:183px;top:545px;" width="64" height="36" viewBox="0 0 64 36"><defs><filter id="bl7" x="0" y="0" width="1" height="1"><feGaussianBlur stdDeviation="0.9"/></filter></defs><g filter="url(#bl7)"><rect width="64" height="36" fill="#2c2d28"/><rect x="0" y="16" width="64" height="20" fill="#35352e"/><rect x="8" y="8" width="8" height="28" fill="#333a30"/><path d="M24 28 Q36 22 44 26 L64 30 L64 36 L24 36 Z" fill="#2a2a26"/><ellipse cx="44.5" cy="22" rx="10.5" ry="5.5" fill="#85704a"/><ellipse cx="43" cy="19" rx="6" ry="2.5" fill="#8a5a40"/><circle cx="47" cy="21.5" r="1.1" fill="#1a1a1a"/><line x1="45.9" y1="12" x2="45.9" y2="17" stroke="#7a8a9a" stroke-width=".7"/><circle cx="45.9" cy="9" r="3" fill="#f05a55"/></g></svg>
<div class="t" style="left:263px;top:558.43px;font-size:15px;line-height:15px;color:#dcdcdc;letter-spacing:-0.4px;">ESC_090</div>
<div class="t" style="left:358px;top:558.43px;font-size:15px;line-height:15px;color:#dcdcdc;letter-spacing:0.25px;">LIGHT</div>
<svg class="b" style="left:473px;top:545px;border-radius:3px;overflow:hidden" width="36" height="36" viewBox="0 0 36 36"><defs><filter id="av7"><feGaussianBlur stdDeviation="0.35"/></filter></defs><g filter="url(#av7)"><rect width="36" height="36" fill="#1c1c1c"/><path d="M6.4 4.2 Q9 1.2 13.2 0.8 Q16 2 16.6 4.8 L15.4 8.6 L8.6 10.6 Q6.2 7.5 6.4 4.2 Z" fill="#ececec"/><ellipse cx="13.2" cy="9.6" rx="9.6" ry="2.7" fill="#f4f4f4" transform="rotate(-34 13.2 9.6)"/><path d="M10 12 L16 9 L18 14 L16 19 L12 18 Z" fill="#3c3c3c"/><path d="M8.6 19 L15.2 16.7 L22.2 14.4 L30 16.7 L32.3 22.1 L28 24.1 L27.2 36 L11.7 36 L9.7 26 L8.2 24.1 Z" fill="#f0f0f0"/><rect x="16" y="21" width="1.6" height="6" fill="#1a1a1a"/><path d="M28.5 24 L31.5 23 L33 36 L28 36 Z" fill="#5a5a5a"/></g></svg>
<div class="t" style="left:521px;top:558.43px;font-size:15px;line-height:15px;color:#dcdcdc;letter-spacing:0.25px;">Dustin Zachary</div>
<div class="b" style="left:654px;top:550px;width:130px;height:32px;background:#5bb66e;border-radius:16px;"></div>
<div class="t" style="left:690.5px;top:558.99px;font-size:14px;line-height:14px;color:#111111;letter-spacing:0.350px;-webkit-text-stroke:0.55px #111111;">REVIEW</div>
<div class="t" style="left:800px;top:558.43px;font-size:15px;line-height:15px;color:#dcdcdc;letter-spacing:0.6px;">3/26/2018 12:00 AM</div>
<div class="t" style="left:990px;top:558.43px;font-size:15px;line-height:15px;color:#dcdcdc;letter-spacing:0.6px;">3/31/2018 12:00 AM</div>
<div class="t" style="left:1179.8px;top:558.43px;font-size:15px;line-height:15px;color:#dcdcdc;letter-spacing:0.6px;">50</div>
<div class="t" style="left:1288.8px;top:558.43px;font-size:15px;line-height:15px;color:#dcdcdc;letter-spacing:0.6px;">31</div>
<div class="t" style="left:1389px;top:554.79px;font-size:14px;line-height:14px;color:#eeeeee;font-weight:700;letter-spacing:0.65px;">62%</div>
<div class="b" style="left:1389px;top:572px;width:104px;height:8px;background:#404040;border-radius:4px;"></div>
<div class="b" style="left:1389px;top:572px;width:64px;height:8px;background:#79b8e2;border-radius:4px;"></div>
<div class="b" style="left:160px;top:594px;width:1348px;height:16px;background:linear-gradient(rgba(0,0,0,.28),rgba(0,0,0,0));"></div>
<svg class="b" style="left:166px;top:627px;" width="10" height="8" viewBox="0 0 10 8"><path d="M0.5 0.5 L9.5 0.5 L5 7 Z" fill="#bdbdbd"/></svg>
<div class="t" style="left:188px;top:621.00px;font-size:19px;line-height:19px;color:#e8e8e8;letter-spacing:-0.161px;-webkit-text-stroke:0.4px #e8e8e8;">Status: NOT STARTED</div>
<div class="b" style="left:175px;top:651px;width:1333px;height:57px;background:#353535;"></div>
<div class="b" style="left:255px;top:651px;width:1px;height:57px;background:#313131;"></div>
<svg class="b" style="left:183px;top:659px;" width="64" height="36" viewBox="0 0 64 36"><defs><filter id="bl8" x="0" y="0" width="1" height="1"><feGaussianBlur stdDeviation="0.9"/></filter></defs><g filter="url(#bl8)"><rect width="64" height="36" fill="#36372f"/><path d="M12 0 L64 0 L64 14 L56 14 Q48 2 36 4 Q30 6 28 14 L26 20 Q18 8 12 8 Z" fill="#5a6264"/><ellipse cx="42" cy="8" rx="14" ry="8" fill="#4a4b40"/><path d="M32 10 Q42 6 54 10 Q50 15 42 12 Q36 14 32 10 Z" fill="#6a6c62"/><ellipse cx="6" cy="5" rx="6" ry="5" fill="#5a5a50"/><ellipse cx="6" cy="5" rx="3" ry="2.5" fill="#34352e"/><path d="M0 10 Q10 12 18 22 L20 36 L0 36 Z" fill="#3c3d34"/><path d="M18 36 L20 26 Q30 22 42 24 Q50 28 52 36 Z" fill="#1e1e1e"/><circle cx="40" cy="23" r="5" fill="#1a1c1e"/><circle cx="40" cy="21" r="4" fill="#2a3434"/><ellipse cx="34" cy="20" rx="3" ry="2" fill="#5a4a40"/><path d="M52 14 Q62 14 64 16 L64 36 L52 36 Z" fill="#33342c"/></g></svg>
<div class="t" style="left:263px;top:672.43px;font-size:15px;line-height:15px;color:#dcdcdc;letter-spacing:-0.4px;">ESC_020</div>
<div class="t" style="left:358px;top:672.43px;font-size:15px;line-height:15px;color:#dcdcdc;letter-spacing:0.25px;">COMP</div>
<svg class="b" style="left:473px;top:659px;border-radius:3px;overflow:hidden" width="36" height="36" viewBox="0 0 36 36"><defs><filter id="av8"><feGaussianBlur stdDeviation="0.35"/></filter></defs><g filter="url(#av8)"><rect width="36" height="36" fill="#ffffff"/><path d="M16.4 7.3 Q21 7.5 23 8.7 Q25.5 12 26.2 15.3 Q26 17.5 25.3 18.9 Q24 21 21.7 22.4 Q19 24.5 16.4 25.1 Q13.5 23.5 12.8 21.6 Z" fill="#d6d6d6"/><path d="M19.9 15.3 Q23 14.8 26 16 Q25.8 19 24 21 Q21 23.5 18 24 Q18.5 19 19.9 15.3 Z" fill="#9a9a9a"/><path d="M21 12.5 Q22.5 11 23.5 12.5" fill="none" stroke="#222" stroke-width="1.2"/><path d="M7.5 12.7 Q7.8 7 9.2 5.6 Q12 2.6 16.4 2.4 Q20 2.4 21.7 3.8 L21.2 5.6 Q18 6.2 16.4 7.3 Q15.3 9.5 15.5 11.8 Q13.5 12.5 12.8 14.4 Q12.2 16.5 11.9 18.9 L10.1 20.7 Q8 20 7.5 18 Z" fill="#1c1c1c"/><ellipse cx="13.3" cy="15" rx="1.3" ry="1.8" fill="#cfcfcf"/><path d="M11.5 19 Q14 22 16 25.5" fill="none" stroke="#333" stroke-width="1.3"/><path d="M0 28.7 Q5 24 9.6 22 Q12 24 14.1 26 L24.4 26 Q26 25 27.5 24.2 Q30 25.5 31.5 27.8 L31.9 36 L0 36 Z" fill="#7a7a7a"/><path d="M0 30 Q4 26 8 24 L10 36 L0 36 Z" fill="#4a4a4a"/><path d="M4 36 L7 29 L9 36 Z" fill="#b0b0b0"/><path d="M26 27 Q29 26 30.5 28.5 L31 36 L27 36 Z" fill="#b8b8b8"/><path d="M14.6 26 L24.4 26 L23.5 36 L15.5 36 Z" fill="#141414"/></g></svg>
<div class="t" style="left:521px;top:672.43px;font-size:15px;line-height:15px;color:#dcdcdc;letter-spacing:0.25px;">Andrew Sinagra</div>
<div class="b" style="left:654px;top:664px;width:130px;height:32px;background:#c4625e;border-radius:16px;"></div>
<div class="t" style="left:668.3px;top:672.99px;font-size:14px;line-height:14px;color:#f2f2f2;letter-spacing:0.415px;-webkit-text-stroke:0.55px #f2f2f2;">NOT STARTED</div>
<div class="t" style="left:800px;top:672.43px;font-size:15px;line-height:15px;color:#dcdcdc;letter-spacing:0.6px;">3/18/2018 12:00 AM</div>
<div class="t" style="left:990px;top:672.43px;font-size:15px;line-height:15px;color:#dcdcdc;letter-spacing:0.6px;">3/25/2018 12:00 AM</div>
<div class="t" style="left:1179.8px;top:672.43px;font-size:15px;line-height:15px;color:#dcdcdc;letter-spacing:0.6px;">30</div>
<div class="t" style="left:1288.8px;top:672.43px;font-size:15px;line-height:15px;color:#dcdcdc;letter-spacing:0.6px;">0</div>
<div class="t" style="left:1389px;top:668.79px;font-size:14px;line-height:14px;color:#eeeeee;font-weight:700;letter-spacing:0.65px;">0%</div>
<div class="b" style="left:1389px;top:686px;width:104px;height:8px;background:#404040;border-radius:4px;"></div>
<div class="b" style="left:175px;top:708px;width:1333px;height:57px;background:#353535;"></div>
<div class="b" style="left:255px;top:708px;width:1px;height:57px;background:#313131;"></div>
<svg class="b" style="left:183px;top:716px;" width="64" height="36" viewBox="0 0 64 36"><defs><filter id="bl9" x="0" y="0" width="1" height="1"><feGaussianBlur stdDeviation="0.9"/></filter></defs><g filter="url(#bl9)"><rect width="64" height="36" fill="#22301f"/><rect x="0" y="0" width="21" height="9" fill="#5f7c5a"/><path d="M6 12 Q14 5 28 5 Q40 6 46 12 Q38 12 28 11 Q16 10 6 14 Z" fill="#56724f"/><path d="M18 14 Q32 10 48 14 L54 30 L20 30 Z" fill="#2f432c"/><rect x="27.5" y="9" width="3" height="15" rx="1.4" fill="#17211a"/><rect x="33.5" y="10" width="3" height="14" rx="1.4" fill="#17211a"/><path d="M40 6 Q48 16 56 26" fill="none" stroke="#18241a" stroke-width="1"/><rect x="59" y="18" width="2.4" height="18" fill="#3a5236"/><path d="M0 10 Q10 14 16 30 L14 36 L0 36 Z" fill="#1e2a1c"/></g></svg>
<div class="t" style="left:263px;top:729.43px;font-size:15px;line-height:15px;color:#dcdcdc;letter-spacing:-0.4px;">ESC_030</div>
<div class="t" style="left:358px;top:729.43px;font-size:15px;line-height:15px;color:#dcdcdc;letter-spacing:0.25px;">COMP</div>
<svg class="b" style="left:473px;top:716px;border-radius:3px;overflow:hidden" width="36" height="36" viewBox="0 0 36 36"><defs><filter id="av9"><feGaussianBlur stdDeviation="0.35"/></filter></defs><g filter="url(#av9)"><rect width="36" height="36" fill="#ffffff"/><path d="M16.4 7.3 Q21 7.5 23 8.7 Q25.5 12 26.2 15.3 Q26 17.5 25.3 18.9 Q24 21 21.7 22.4 Q19 24.5 16.4 25.1 Q13.5 23.5 12.8 21.6 Z" fill="#d6d6d6"/><path d="M19.9 15.3 Q23 14.8 26 16 Q25.8 19 24 21 Q21 23.5 18 24 Q18.5 19 19.9 15.3 Z" fill="#9a9a9a"/><path d="M21 12.5 Q22.5 11 23.5 12.5" fill="none" stroke="#222" stroke-width="1.2"/><path d="M7.5 12.7 Q7.8 7 9.2 5.6 Q12 2.6 16.4 2.4 Q20 2.4 21.7 3.8 L21.2 5.6 Q18 6.2 16.4 7.3 Q15.3 9.5 15.5 11.8 Q13.5 12.5 12.8 14.4 Q12.2 16.5 11.9 18.9 L10.1 20.7 Q8 20 7.5 18 Z" fill="#1c1c1c"/><ellipse cx="13.3" cy="15" rx="1.3" ry="1.8" fill="#cfcfcf"/><path d="M11.5 19 Q14 22 16 25.5" fill="none" stroke="#333" stroke-width="1.3"/><path d="M0 28.7 Q5 24 9.6 22 Q12 24 14.1 26 L24.4 26 Q26 25 27.5 24.2 Q30 25.5 31.5 27.8 L31.9 36 L0 36 Z" fill="#7a7a7a"/><path d="M0 30 Q4 26 8 24 L10 36 L0 36 Z" fill="#4a4a4a"/><path d="M4 36 L7 29 L9 36 Z" fill="#b0b0b0"/><path d="M26 27 Q29 26 30.5 28.5 L31 36 L27 36 Z" fill="#b8b8b8"/><path d="M14.6 26 L24.4 26 L23.5 36 L15.5 36 Z" fill="#141414"/></g></svg>
<div class="t" style="left:521px;top:729.43px;font-size:15px;line-height:15px;color:#dcdcdc;letter-spacing:0.25px;">Andrew Sinagra</div>
<div class="b" style="left:654px;top:721px;width:130px;height:32px;background:#c4625e;border-radius:16px;"></div>
<div class="t" style="left:668.3px;top:729.99px;font-size:14px;line-height:14px;color:#f2f2f2;letter-spacing:0.415px;-webkit-text-stroke:0.55px #f2f2f2;">NOT STARTED</div>
<div class="t" style="left:800px;top:729.43px;font-size:15px;line-height:15px;color:#dcdcdc;letter-spacing:0.6px;">3/26/2018 11:00 PM</div>
<div class="t" style="left:990px;top:729.43px;font-size:15px;line-height:15px;color:#dcdcdc;letter-spacing:0.6px;">3/30/2018 11:00 PM</div>
<div class="t" style="left:1179.8px;top:729.43px;font-size:15px;line-height:15px;color:#dcdcdc;letter-spacing:0.6px;">30</div>
<div class="t" style="left:1288.8px;top:729.43px;font-size:15px;line-height:15px;color:#dcdcdc;letter-spacing:0.6px;">0</div>
<div class="t" style="left:1389px;top:725.79px;font-size:14px;line-height:14px;color:#eeeeee;font-weight:700;letter-spacing:0.65px;">0%</div>
<div class="b" style="left:1389px;top:743px;width:104px;height:8px;background:#404040;border-radius:4px;"></div>
<div class="b" style="left:160px;top:765px;width:1348px;height:16px;background:linear-gradient(rgba(0,0,0,.28),rgba(0,0,0,0));"></div>
<svg class="b" style="left:166px;top:798px;" width="10" height="8" viewBox="0 0 10 8"><path d="M0.5 0.5 L9.5 0.5 L5 7 Z" fill="#bdbdbd"/></svg>
<div class="t" style="left:188px;top:792.00px;font-size:19px;line-height:19px;color:#e8e8e8;letter-spacing:0.100px;-webkit-text-stroke:0.4px #e8e8e8;">Status: KICKBACK</div>
<div class="b" style="left:175px;top:822px;width:1333px;height:57px;background:#353535;"></div>
<div class="b" style="left:255px;top:822px;width:1px;height:57px;background:#313131;"></div>
<svg class="b" style="left:183px;top:830px;" width="64" height="36" viewBox="0 0 64 36"><defs><filter id="bl10" x="0" y="0" width="1" height="1"><feGaussianBlur stdDeviation="0.9"/></filter></defs><g filter="url(#bl10)"><rect width="64" height="36" fill="#36372f"/><path d="M12 0 L64 0 L64 14 L56 14 Q48 2 36 4 Q30 6 28 14 L26 20 Q18 8 12 8 Z" fill="#5a6264"/><ellipse cx="42" cy="8" rx="14" ry="8" fill="#4a4b40"/><path d="M32 10 Q42 6 54 10 Q50 15 42 12 Q36 14 32 10 Z" fill="#6a6c62"/><ellipse cx="6" cy="5" rx="6" ry="5" fill="#5a5a50"/><ellipse cx="6" cy="5" rx="3" ry="2.5" fill="#34352e"/><path d="M0 10 Q10 12 18 22 L20 36 L0 36 Z" fill="#3c3d34"/><path d="M18 36 L20 26 Q30 22 42 24 Q50 28 52 36 Z" fill="#1e1e1e"/><circle cx="40" cy="23" r="5" fill="#1a1c1e"/><circle cx="40" cy="21" r="4" fill="#2a3434"/><ellipse cx="34" cy="20" rx="3" ry="2" fill="#5a4a40"/><path d="M52 14 Q62 14 64 16 L64 36 L52 36 Z" fill="#33342c"/></g></svg>
<div class="t" style="left:263px;top:843.43px;font-size:15px;line-height:15px;color:#dcdcdc;letter-spacing:-0.4px;">ESC_020</div>
<div class="t" style="left:358px;top:843.43px;font-size:15px;line-height:15px;color:#dcdcdc;letter-spacing:0.25px;">ANIM</div>
<svg class="b" style="left:473px;top:830px;border-radius:3px;overflow:hidden" width="36" height="36" viewBox="0 0 36 36"><defs><filter id="av10"><feGaussianBlur stdDeviation="0.35"/></filter></defs><g filter="url(#av10)"><rect width="36" height="36" fill="#1c1c1c"/><path d="M6.4 4.2 Q9 1.2 13.2 0.8 Q16 2 16.6 4.8 L15.4 8.6 L8.6 10.6 Q6.2 7.5 6.4 4.2 Z" fill="#ececec"/><ellipse cx="13.2" cy="9.6" rx="9.6" ry="2.7" fill="#f4f4f4" transform="rotate(-34 13.2 9.6)"/><path d="M10 12 L16 9 L18 14 L16 19 L12 18 Z" fill="#3c3c3c"/><path d="M8.6 19 L15.2 16.7 L22.2 14.4 L30 16.7 L32.3 22.1 L28 24.1 L27.2 36 L11.7 36 L9.7 26 L8.2 24.1 Z" fill="#f0f0f0"/><rect x="16" y="21" width="1.6" height="6" fill="#1a1a1a"/><path d="M28.5 24 L31.5 23 L33 36 L28 36 Z" fill="#5a5a5a"/></g></svg>
<div class="t" style="left:521px;top:843.43px;font-size:15px;line-height:15px;color:#dcdcdc;letter-spacing:0.25px;">Dustin Zachary</div>
<div class="b" style="left:654px;top:835px;width:130px;height:32px;background:#a96dba;border-radius:16px;"></div>
<div class="t" style="left:680.5px;top:843.99px;font-size:14px;line-height:14px;color:#f4f4f4;letter-spacing:0.882px;-webkit-text-stroke:0.55px #f4f4f4;">KICKBACK</div>
<div class="t" style="left:800px;top:843.43px;font-size:15px;line-height:15px;color:#dcdcdc;letter-spacing:0.6px;">2/26/2018 12:00 AM</div>
<div class="t" style="left:990px;top:843.43px;font-size:15px;line-height:15px;color:#dcdcdc;letter-spacing:0.6px;">3/3/2018 12:00 AM</div>
<div class="t" style="left:1179.8px;top:843.43px;font-size:15px;line-height:15px;color:#dcdcdc;letter-spacing:0.6px;">50</div>
<div class="t" style="left:1288.8px;top:843.43px;font-size:15px;line-height:15px;color:#dcdcdc;letter-spacing:0.6px;">24</div>
<div class="t" style="left:1389px;top:839.79px;font-size:14px;line-height:14px;color:#eeeeee;font-weight:700;letter-spacing:0.65px;">48%</div>
<div class="b" style="left:1389px;top:857px;width:104px;height:8px;background:#404040;border-radius:4px;"></div>
<div class="b" style="left:1389px;top:857px;width:50px;height:8px;background:#79b8e2;border-radius:4px;"></div>
<div class="b" style="left:175px;top:879px;width:1333px;height:57px;background:#353535;"></div>
<div class="b" style="left:255px;top:879px;width:1px;height:57px;background:#313131;"></div>
<svg class="b" style="left:183px;top:887px;" width="64" height="36" viewBox="0 0 64 36"><defs><filter id="bl11" x="0" y="0" width="1" height="1"><feGaussianBlur stdDeviation="0.9"/></filter></defs><g filter="url(#bl11)"><rect width="64" height="36" fill="#22301f"/><rect x="0" y="0" width="21" height="9" fill="#5f7c5a"/><path d="M6 12 Q14 5 28 5 Q40 6 46 12 Q38 12 28 11 Q16 10 6 14 Z" fill="#56724f"/><path d="M18 14 Q32 10 48 14 L54 30 L20 30 Z" fill="#2f432c"/><rect x="27.5" y="9" width="3" height="15" rx="1.4" fill="#17211a"/><rect x="33.5" y="10" width="3" height="14" rx="1.4" fill="#17211a"/><path d="M40 6 Q48 16 56 26" fill="none" stroke="#18241a" stroke-width="1"/><rect x="59" y="18" width="2.4" height="18" fill="#3a5236"/><path d="M0 10 Q10 14 16 30 L14 36 L0 36 Z" fill="#1e2a1c"/></g></svg>
<div class="t" style="left:263px;top:900.43px;font-size:15px;line-height:15px;color:#dcdcdc;letter-spacing:-0.4px;">ESC_030</div>
<div class="t" style="left:358px;top:900.43px;font-size:15px;line-height:15px;color:#dcdcdc;letter-spacing:0.25px;">LIGHT</div>
<svg class="b" style="left:473px;top:887px;border-radius:3px;overflow:hidden" width="36" height="36" viewBox="0 0 36 36"><defs><filter id="av11"><feGaussianBlur stdDeviation="0.35"/></filter></defs><g filter="url(#av11)"><rect width="36" height="36" fill="#1c1c1c"/><path d="M6.4 4.2 Q9 1.2 13.2 0.8 Q16 2 16.6 4.8 L15.4 8.6 L8.6 10.6 Q6.2 7.5 6.4 4.2 Z" fill="#ececec"/><ellipse cx="13.2" cy="9.6" rx="9.6" ry="2.7" fill="#f4f4f4" transform="rotate(-34 13.2 9.6)"/><path d="M10 12 L16 9 L18 14 L16 19 L12 18 Z" fill="#3c3c3c"/><path d="M8.6 19 L15.2 16.7 L22.2 14.4 L30 16.7 L32.3 22.1 L28 24.1 L27.2 36 L11.7 36 L9.7 26 L8.2 24.1 Z" fill="#f0f0f0"/><rect x="16" y="21" width="1.6" height="6" fill="#1a1a1a"/><path d="M28.5 24 L31.5 23 L33 36 L28 36 Z" fill="#5a5a5a"/></g></svg>
<div class="t" style="left:521px;top:900.43px;font-size:15px;line-height:15px;color:#dcdcdc;letter-spacing:0.25px;">Dustin Zachary</div>
<div class="b" style="left:654px;top:892px;width:130px;height:32px;background:#a96dba;border-radius:16px;"></div>
<div class="t" style="left:680.5px;top:900.99px;font-size:14px;line-height:14px;color:#f4f4f4;letter-spacing:0.882px;-webkit-text-stroke:0.55px #f4f4f4;">KICKBACK</div>
<div class="t" style="left:800px;top:900.43px;font-size:15px;line-height:15px;color:#dcdcdc;letter-spacing:0.6px;">3/18/2018 11:00 PM</div>
<div class="t" style="left:990px;top:900.43px;font-size:15px;line-height:15px;color:#dcdcdc;letter-spacing:0.6px;">3/21/2018 11:00 PM</div>
<div class="t" style="left:1179.8px;top:900.43px;font-size:15px;line-height:15px;color:#dcdcdc;letter-spacing:0.6px;">50</div>
<div class="t" style="left:1288.8px;top:900.43px;font-size:15px;line-height:15px;color:#dcdcdc;letter-spacing:0.6px;">36</div>
<div class="t" style="left:1389px;top:896.79px;font-size:14px;line-height:14px;color:#eeeeee;font-weight:700;letter-spacing:0.65px;">72%</div>
<div class="b" style="left:1389px;top:914px;width:104px;height:8px;background:#404040;border-radius:4px;"></div>
<div class="b" style="left:1389px;top:914px;width:75px;height:8px;background:#79b8e2;border-radius:4px;"></div>
<div class="b" style="left:175px;top:936px;width:1333px;height:57px;background:#353535;"></div>
<div class="b" style="left:255px;top:936px;width:1px;height:57px;background:#313131;"></div>
<svg class="b" style="left:183px;top:944px;" width="64" height="36" viewBox="0 0 64 36"><defs><filter id="bl12" x="0" y="0" width="1" height="1"><feGaussianBlur stdDeviation="0.9"/></filter></defs><g filter="url(#bl12)"><rect width="64" height="36" fill="#222222"/><path d="M0 26 Q20 24 40 30 L46 36 L0 36 Z" fill="#363a38"/><path d="M16 14 Q30 8 42 16 Q56 22 62 34 L36 36 Q24 24 16 14 Z" fill="#45453a"/><ellipse cx="24" cy="6" rx="6" ry="4.5" fill="#4a5560"/><circle cx="26" cy="4" r="1.2" fill="#9aa4a8"/><path d="M7 7 L16 11" stroke="#8a9aa0" stroke-width="1.6"/><ellipse cx="14" cy="17" rx="2" ry="2" fill="#5a3a34"/><circle cx="54" cy="24" r="2.2" fill="#8a2a2a"/><ellipse cx="54" cy="33" rx="6" ry="3" fill="#6a5035"/></g></svg>
<div class="t" style="left:263px;top:957.43px;font-size:15px;line-height:15px;color:#dcdcdc;letter-spacing:-0.4px;">ESC_070</div>
<div class="t" style="left:358px;top:957.43px;font-size:15px;line-height:15px;color:#dcdcdc;letter-spacing:0.25px;">COMP</div>
<svg class="b" style="left:473px;top:949.6px;border-radius:3px;overflow:hidden" width="36" height="25.4" viewBox="0 0 36 25.4"><defs><filter id="av12"><feGaussianBlur stdDeviation="0.35"/></filter></defs><g filter="url(#av12)"><rect width="36" height="25.4" fill="#4a4a4a"/><path d="M0 2 L5 0 L12 0 L12 4 L0 4 Z" fill="#f4f4f4"/><path d="M26 0 L35 0 L36 2 L36 6 L30 6 L28 10 Z" fill="#f0f0f0"/><path d="M0 10 L5 10 L7 20 L0 20 Z" fill="#e8e8e8"/><ellipse cx="19" cy="12.5" rx="9.5" ry="12.5" fill="#1e1e1e"/><ellipse cx="19" cy="4" rx="4" ry="3" fill="#3a3a3a"/><path d="M15.5 17 Q19 16 22.5 17 Q19 21 15.5 17 Z" fill="#e0e0e0"/><path d="M28 14 L32 12 L34 25.4 L29 25.4 Z" fill="#888"/><path d="M2 22 L6 20 L8 25.4 L2 25.4 Z" fill="#aaa"/></g></svg>
<div class="t" style="left:521px;top:957.43px;font-size:15px;line-height:15px;color:#dcdcdc;letter-spacing:0.25px;">Jerome Knight</div>
<div class="b" style="left:654px;top:949px;width:130px;height:32px;background:#a96dba;border-radius:16px;"></div>
<div class="t" style="left:680.5px;top:957.99px;font-size:14px;line-height:14px;color:#f4f4f4;letter-spacing:0.882px;-webkit-text-stroke:0.55px #f4f4f4;">KICKBACK</div>
<div class="t" style="left:800px;top:957.43px;font-size:15px;line-height:15px;color:#dcdcdc;letter-spacing:0.6px;">3/12/2018 1:00 AM</div>
<div class="t" style="left:990px;top:957.43px;font-size:15px;line-height:15px;color:#dcdcdc;letter-spacing:0.6px;">3/17/2018 1:00 AM</div>
<div class="t" style="left:1179.8px;top:957.43px;font-size:15px;line-height:15px;color:#dcdcdc;letter-spacing:0.6px;">30</div>
<div class="t" style="left:1288.8px;top:957.43px;font-size:15px;line-height:15px;color:#dcdcdc;letter-spacing:0.6px;">48</div>
<div class="t" style="left:1389px;top:953.79px;font-size:14px;line-height:14px;color:#eeeeee;font-weight:700;letter-spacing:0.65px;">160%</div>
<div class="b" style="left:1389px;top:971px;width:104px;height:8px;background:#2c6592;border-radius:4px;"></div>
<div class="b" style="left:1389px;top:971px;width:65px;height:8px;background:#79b8e2;border-radius:4px;"></div>
<div class="b" style="left:175px;top:993px;width:1333px;height:57px;background:#353535;"></div>
<div class="b" style="left:255px;top:993px;width:1px;height:57px;background:#313131;"></div>
<svg class="b" style="left:183px;top:1001px;" width="64" height="36" viewBox="0 0 64 36"><defs><filter id="bl13" x="0" y="0" width="1" height="1"><feGaussianBlur stdDeviation="0.9"/></filter></defs><g filter="url(#bl13)"><rect width="64" height="36" fill="#2c2d28"/><rect x="0" y="16" width="64" height="20" fill="#35352e"/><rect x="8" y="8" width="8" height="28" fill="#333a30"/><path d="M24 28 Q36 22 44 26 L64 30 L64 36 L24 36 Z" fill="#2a2a26"/><ellipse cx="44.5" cy="22" rx="10.5" ry="5.5" fill="#85704a"/><ellipse cx="43" cy="19" rx="6" ry="2.5" fill="#8a5a40"/><circle cx="47" cy="21.5" r="1.1" fill="#1a1a1a"/><line x1="45.9" y1="12" x2="45.9" y2="17" stroke="#7a8a9a" stroke-width=".7"/><circle cx="45.9" cy="9" r="3" fill="#f05a55"/></g></svg>
<div class="t" style="left:263px;top:1014.43px;font-size:15px;line-height:15px;color:#dcdcdc;letter-spacing:-0.4px;">ESC_090</div>
<div class="t" style="left:358px;top:1014.43px;font-size:15px;line-height:15px;color:#dcdcdc;letter-spacing:0.25px;">ANIM</div>
<svg class="b" style="left:473px;top:1001px;border-radius:3px;overflow:hidden" width="36" height="36" viewBox="0 0 36 36"><defs><filter id="av13"><feGaussianBlur stdDeviation="0.35"/></filter></defs><g filter="url(#av13)"><rect width="36" height="36" fill="#1c1c1c"/><path d="M6.4 4.2 Q9 1.2 13.2 0.8 Q16 2 16.6 4.8 L15.4 8.6 L8.6 10.6 Q6.2 7.5 6.4 4.2 Z" fill="#ececec"/><ellipse cx="13.2" cy="9.6" rx="9.6" ry="2.7" fill="#f4f4f4" transform="rotate(-34 13.2 9.6)"/><path d="M10 12 L16 9 L18 14 L16 19 L12 18 Z" fill="#3c3c3c"/><path d="M8.6 19 L15.2 16.7 L22.2 14.4 L30 16.7 L32.3 22.1 L28 24.1 L27.2 36 L11.7 36 L9.7 26 L8.2 24.1 Z" fill="#f0f0f0"/><rect x="16" y="21" width="1.6" height="6" fill="#1a1a1a"/><path d="M28.5 24 L31.5 23 L33 36 L28 36 Z" fill="#5a5a5a"/></g></svg>
<div class="t" style="left:521px;top:1014.43px;font-size:15px;line-height:15px;color:#dcdcdc;letter-spacing:0.25px;">Dustin Zachary</div>
<div class="b" style="left:654px;top:1006px;width:130px;height:32px;background:#a96dba;border-radius:16px;"></div>
<div class="t" style="left:680.5px;top:1014.99px;font-size:14px;line-height:14px;color:#f4f4f4;letter-spacing:0.882px;-webkit-text-stroke:0.55px #f4f4f4;">KICKBACK</div>
<div class="t" style="left:800px;top:1014.43px;font-size:15px;line-height:15px;color:#dcdcdc;letter-spacing:0.6px;">3/18/2018 11:00 PM</div>
<div class="t" style="left:990px;top:1014.43px;font-size:15px;line-height:15px;color:#dcdcdc;letter-spacing:0.6px;">3/23/2018 11:00 PM</div>
<div class="t" style="left:1179.8px;top:1014.43px;font-size:15px;line-height:15px;color:#dcdcdc;letter-spacing:0.6px;">40</div>
<div class="t" style="left:1288.8px;top:1014.43px;font-size:15px;line-height:15px;color:#dcdcdc;letter-spacing:0.6px;">30</div>
<div class="t" style="left:1389px;top:1010.79px;font-size:14px;line-height:14px;color:#eeeeee;font-weight:700;letter-spacing:0.65px;">75%</div>
<div class="b" style="left:1389px;top:1028px;width:104px;height:8px;background:#404040;border-radius:4px;"></div>
<div class="b" style="left:1389px;top:1028px;width:78px;height:8px;background:#79b8e2;border-radius:4px;"></div>
<div class="b" style="left:160px;top:1033px;width:1348px;height:47px;background:#34475a;"></div>
<svg class="b" style="left:177px;top:1052px;" width="8" height="9" viewBox="0 0 8 9"><rect x="0" y="0" width="1.6" height="9" fill="#5a96c2"/><path d="M8 0 L8 9 L2 4.5 Z" fill="#5a96c2"/></svg>
<svg class="b" style="left:205px;top:1052px;" width="7" height="9" viewBox="0 0 7 9"><path d="M6.5 0 L6.5 9 L0.5 4.5 Z" fill="#5a96c2"/></svg>
<div class="b" style="left:221px;top:1043px;width:25px;height:27px;background:#47617a;border-radius:50%;"></div>
<div class="t" style="left:229.609375px;top:1049.29px;font-size:14px;line-height:14px;color:#d0d8e0;letter-spacing:0.000px;">1</div>
<svg class="b" style="left:256px;top:1052px;" width="7" height="9" viewBox="0 0 7 9"><path d="M0.5 0 L0.5 9 L6.5 4.5 Z" fill="#5a96c2"/></svg>
<svg class="b" style="left:282px;top:1052px;" width="8" height="9" viewBox="0 0 8 9"><path d="M0 0 L0 9 L6 4.5 Z" fill="#5a96c2"/><rect x="6.4" y="0" width="1.6" height="9" fill="#5a96c2"/></svg>
<div class="b" style="left:313px;top:1042px;width:70px;height:30px;background:transparent;border:1px solid #4a6075;border-radius:4px;box-sizing:border-box;"></div>
<div class="t" style="left:322px;top:1048.63px;font-size:15px;line-height:15px;color:#e0e0e0;letter-spacing:0.5px;">25</div>
<svg class="b" style="left:362px;top:1054px;" width="10" height="7" viewBox="0 0 10 7"><path d="M0.5 0.5 L9.5 0.5 L5 6.5 Z" fill="#d0d0d0"/></svg>
<div class="t" style="left:389px;top:1050.45px;font-size:13px;line-height:13px;color:#d4d8dc;letter-spacing:0.076px;">items per page</div>
<div class="t" style="left:1382.4px;top:1049.25px;font-size:13px;line-height:13px;color:#c8ccd0;letter-spacing:0.220px;">1 - 23 of 23 items</div>
<div class="b" style="left:1508px;top:40px;width:412px;height:1040px;background:#333333;"></div>
<div class="b" style="left:1508px;top:40px;width:412px;height:34px;background:#34475a;"></div>
<div class="t" style="left:1646.0px;top:48.55px;font-size:19.3px;line-height:19.3px;color:#e8eaec;letter-spacing:-0.575px;-webkit-text-stroke:0.25px #e8eaec;">TASK DETAILS</div>
<div class="b" style="left:1899px;top:47.6px;width:4.8px;height:4.8px;background:#8e9398;border-radius:50%;"></div>
<div class="b" style="left:1899px;top:55.1px;width:4.8px;height:4.8px;background:#8e9398;border-radius:50%;"></div>
<div class="b" style="left:1899px;top:62.6px;width:4.8px;height:4.8px;background:#8e9398;border-radius:50%;"></div>
<div class="b" style="left:1508px;top:76px;width:412px;height:46px;background:#222222;"></div>
<div class="b" style="left:1580px;top:76px;width:87px;height:46px;background:#333333;"></div>
<div class="t" style="left:1523.3px;top:96.15px;font-size:15.5px;line-height:15.5px;color:#eeeeee;letter-spacing:0.585px;-webkit-text-stroke:0.2px #eee;">TASK</div>
<div class="t" style="left:1595.6px;top:96.15px;font-size:15.5px;line-height:15.5px;color:#dddddd;letter-spacing:0.423px;">NOTES</div>
<div class="t" style="left:1681.8px;top:96.15px;font-size:15.5px;line-height:15.5px;color:#eeeeee;letter-spacing:0.809px;-webkit-text-stroke:0.2px #eee;">REVIEW</div>
<div class="t" style="left:1778.4px;top:96.15px;font-size:15.5px;line-height:15.5px;color:#eeeeee;letter-spacing:0.236px;-webkit-text-stroke:0.2px #eee;">RENDERS</div>
<div class="b" style="left:1521px;top:132px;width:181px;height:34px;background:#34475a;border:1px solid #4a6075;border-radius:4px;box-sizing:border-box;"></div>
<div class="b" style="left:1726px;top:132px;width:181px;height:34px;background:#34475a;border:1px solid #4a6075;border-radius:4px;box-sizing:border-box;"></div>
<div class="t" style="left:1564.4px;top:142.15px;font-size:15.5px;line-height:15.5px;color:#e4e6e8;letter-spacing:1.744px;-webkit-text-stroke:0.2px #e4e6e8;">ADD NOTE</div>
<div class="t" style="left:1745px;top:142.15px;font-size:15.5px;line-height:15.5px;color:#e4e6e8;letter-spacing:1.590px;-webkit-text-stroke:0.2px #e4e6e8;">MARK ALL READ</div>
<div class="b" style="left:1508px;top:172px;width:412px;height:908px;background:#3d3d3d;box-shadow:inset 0 8px 10px -6px rgba(0,0,0,.55);"></div>
<div class="b" style="left:1508px;top:122px;width:1px;height:958px;background:#2a2a2a;"></div>
<div class="b" style="left:1509px;top:172px;width:1px;height:908px;background:#3a3a3a;"></div>
<div class="b" style="left:1521px;top:184px;width:388px;height:282px;background:#464646;border-radius:6px;box-shadow:0 7px 16px 5px rgba(0,0,0,.45);"></div>
<svg class="b" style="left:1534px;top:200px;" width="20" height="22" viewBox="0 0 20 22"><path d="M3 1.2 L15.5 1.2 Q18.6 1.2 18.6 4.3 L18.6 15 L13 20.6 L3 20.6 Q1 20.6 1 18.4 L1 3.4 Q1 1.2 3 1.2 Z" fill="none" stroke="#4a86a2" stroke-width="1.45"/><path d="M13 20.6 Q13 15.8 18.6 15" fill="none" stroke="#4a86a2" stroke-width="1.3"/><line x1="5" y1="6.8" x2="14.5" y2="6.8" stroke="#4a86a2" stroke-width="1.5"/><line x1="5" y1="10.3" x2="14.5" y2="10.3" stroke="#4a86a2" stroke-width="1.5"/><line x1="5" y1="13.8" x2="11.5" y2="13.8" stroke="#4a86a2" stroke-width="1.5"/></svg>
<svg class="b" style="left:1565px;top:198px;border-radius:3px;overflow:hidden" width="36" height="36" viewBox="0 0 36 36"><defs><filter id="av14"><feGaussianBlur stdDeviation="0.35"/></filter></defs><g filter="url(#av14)"><rect width="36" height="36" fill="#ffffff"/><path d="M16.4 7.3 Q21 7.5 23 8.7 Q25.5 12 26.2 15.3 Q26 17.5 25.3 18.9 Q24 21 21.7 22.4 Q19 24.5 16.4 25.1 Q13.5 23.5 12.8 21.6 Z" fill="#d6d6d6"/><path d="M19.9 15.3 Q23 14.8 26 16 Q25.8 19 24 21 Q21 23.5 18 24 Q18.5 19 19.9 15.3 Z" fill="#9a9a9a"/><path d="M21 12.5 Q22.5 11 23.5 12.5" fill="none" stroke="#222" stroke-width="1.2"/><path d="M7.5 12.7 Q7.8 7 9.2 5.6 Q12 2.6 16.4 2.4 Q20 2.4 21.7 3.8 L21.2 5.6 Q18 6.2 16.4 7.3 Q15.3 9.5 15.5 11.8 Q13.5 12.5 12.8 14.4 Q12.2 16.5 11.9 18.9 L10.1 20.7 Q8 20 7.5 18 Z" fill="#1c1c1c"/><ellipse cx="13.3" cy="15" rx="1.3" ry="1.8" fill="#cfcfcf"/><path d="M11.5 19 Q14 22 16 25.5" fill="none" stroke="#333" stroke-width="1.3"/><path d="M0 28.7 Q5 24 9.6 22 Q12 24 14.1 26 L24.4 26 Q26 25 27.5 24.2 Q30 25.5 31.5 27.8 L31.9 36 L0 36 Z" fill="#7a7a7a"/><path d="M0 30 Q4 26 8 24 L10 36 L0 36 Z" fill="#4a4a4a"/><path d="M4 36 L7 29 L9 36 Z" fill="#b0b0b0"/><path d="M26 27 Q29 26 30.5 28.5 L31 36 L27 36 Z" fill="#b8b8b8"/><path d="M14.6 26 L24.4 26 L23.5 36 L15.5 36 Z" fill="#141414"/></g></svg>
<div class="t" style="left:1609px;top:200.35px;font-size:13px;line-height:13px;color:#7c7c7c;letter-spacing:0.394px;">@ 2/12/2018 1:33 PM</div>
<div class="t" style="left:1609px;top:215.80px;font-size:19px;line-height:19px;color:#eeeeee;letter-spacing:0.111px;-webkit-text-stroke:0.3px #eee;">Andrew Sinagra</div>
<div class="t" style="left:1565px;top:243.79px;font-size:14px;line-height:14px;color:#e2e2e2;letter-spacing:0.843px;-webkit-text-stroke:0.25px #e2e2e2;">Increase the intensity of the flash.</div>
<svg class="b" style="left:1875px;top:200px;" width="24" height="24" viewBox="0 0 24 24"><circle cx="12" cy="12" r="11" fill="none" stroke="#5a5a5a" stroke-width="1.6"/><path d="M5.2 11.8 L10 16.4 L18.8 7.6" fill="none" stroke="#e4e4e4" stroke-width="2.9"/></svg>
<svg class="b" style="left:1877px;top:236px;" width="25" height="18" viewBox="0 0 25 18"><path d="M9.5 0.5 L0.5 7.8 L9.5 15 L9.5 10.6 Q18.5 10 24.2 17.5 Q22 5.2 9.5 4.8 Z" fill="#606060"/></svg>
<svg class="b" style="left:1880px;top:263px;" width="18" height="18" viewBox="0 0 18 18"><path d="M10.4 3.6 L14.2 7.4 L4.8 16.8 L1 13 Z" fill="#606060"/><path d="M12 2 L13.6 0.4 L17.4 4.2 L15.8 5.8 Z" fill="#606060"/><path d="M0.6 13.6 L4.2 17.2 L0 17.9 Z" fill="#606060"/></svg>
<svg class="b" style="left:1879px;top:290px;" width="17" height="17" viewBox="0 0 17 17"><path d="M2.5 2.5 L14.5 14.5 M14.5 2.5 L2.5 14.5" stroke="#686868" stroke-width="4"/></svg>
<div class="b" style="left:1521px;top:338px;width:388px;height:1px;background:#525252;"></div>
<svg class="b" style="left:1564px;top:354px;" width="20" height="22" viewBox="0 0 20 22"><path d="M3 1.2 L15.5 1.2 Q18.6 1.2 18.6 4.3 L18.6 15 L13 20.6 L3 20.6 Q1 20.6 1 18.4 L1 3.4 Q1 1.2 3 1.2 Z" fill="none" stroke="#a8a8a8" stroke-width="1.45"/><path d="M13 20.6 Q13 15.8 18.6 15" fill="none" stroke="#a8a8a8" stroke-width="1.3"/><line x1="5" y1="6.8" x2="14.5" y2="6.8" stroke="#a8a8a8" stroke-width="1.5"/><line x1="5" y1="10.3" x2="14.5" y2="10.3" stroke="#a8a8a8" stroke-width="1.5"/><line x1="5" y1="13.8" x2="11.5" y2="13.8" stroke="#a8a8a8" stroke-width="1.5"/></svg>
<svg class="b" style="left:1595px;top:353px;border-radius:3px;overflow:hidden" width="36" height="36" viewBox="0 0 36 36"><defs><filter id="av15"><feGaussianBlur stdDeviation="0.35"/></filter></defs><g filter="url(#av15)"><rect width="36" height="36" fill="#ffffff"/><path d="M16.4 7.3 Q21 7.5 23 8.7 Q25.5 12 26.2 15.3 Q26 17.5 25.3 18.9 Q24 21 21.7 22.4 Q19 24.5 16.4 25.1 Q13.5 23.5 12.8 21.6 Z" fill="#d6d6d6"/><path d="M19.9 15.3 Q23 14.8 26 16 Q25.8 19 24 21 Q21 23.5 18 24 Q18.5 19 19.9 15.3 Z" fill="#9a9a9a"/><path d="M21 12.5 Q22.5 11 23.5 12.5" fill="none" stroke="#222" stroke-width="1.2"/><path d="M7.5 12.7 Q7.8 7 9.2 5.6 Q12 2.6 16.4 2.4 Q20 2.4 21.7 3.8 L21.2 5.6 Q18 6.2 16.4 7.3 Q15.3 9.5 15.5 11.8 Q13.5 12.5 12.8 14.4 Q12.2 16.5 11.9 18.9 L10.1 20.7 Q8 20 7.5 18 Z" fill="#1c1c1c"/><ellipse cx="13.3" cy="15" rx="1.3" ry="1.8" fill="#cfcfcf"/><path d="M11.5 19 Q14 22 16 25.5" fill="none" stroke="#333" stroke-width="1.3"/><path d="M0 28.7 Q5 24 9.6 22 Q12 24 14.1 26 L24.4 26 Q26 25 27.5 24.2 Q30 25.5 31.5 27.8 L31.9 36 L0 36 Z" fill="#7a7a7a"/><path d="M0 30 Q4 26 8 24 L10 36 L0 36 Z" fill="#4a4a4a"/><path d="M4 36 L7 29 L9 36 Z" fill="#b0b0b0"/><path d="M26 27 Q29 26 30.5 28.5 L31 36 L27 36 Z" fill="#b8b8b8"/><path d="M14.6 26 L24.4 26 L23.5 36 L15.5 36 Z" fill="#141414"/></g></svg>
<div class="t" style="left:1641px;top:352.95px;font-size:13px;line-height:13px;color:#7c7c7c;letter-spacing:0.545px;">@ 5/28/2021 11:04 AM</div>
<div class="t" style="left:1641px;top:368.00px;font-size:19px;line-height:19px;color:#eeeeee;letter-spacing:0.119px;-webkit-text-stroke:0.3px #eee;">Andrew Sinagra</div>
<div class="t" style="left:1595px;top:398.49px;font-size:14px;line-height:14px;color:#e2e2e2;letter-spacing:0.782px;-webkit-text-stroke:0.25px #e2e2e2;">I increased the flash intensity by 20%</div>
<div class="t" style="left:1595px;top:416.79px;font-size:14px;line-height:14px;color:#e2e2e2;letter-spacing:0.567px;-webkit-text-stroke:0.25px #e2e2e2;">on the last pass.</div>
<svg class="b" style="left:1877px;top:355.3px;" width="24" height="24" viewBox="0 0 24 24"><circle cx="12" cy="12" r="11" fill="none" stroke="#5a5a5a" stroke-width="1.6"/></svg>
<svg class="b" style="left:1882px;top:386px;" width="18" height="18" viewBox="0 0 18 18"><path d="M10.4 3.6 L14.2 7.4 L4.8 16.8 L1 13 Z" fill="#606060"/><path d="M12 2 L13.6 0.4 L17.4 4.2 L15.8 5.8 Z" fill="#606060"/><path d="M0.6 13.6 L4.2 17.2 L0 17.9 Z" fill="#606060"/></svg>
<svg class="b" style="left:1881px;top:413.6px;" width="17" height="17" viewBox="0 0 17 17"><path d="M2.5 2.5 L14.5 14.5 M14.5 2.5 L2.5 14.5" stroke="#686868" stroke-width="4"/></svg>
<div class="b" style="left:1521px;top:479px;width:388px;height:407px;background:#464646;border-radius:6px;box-shadow:0 7px 16px 5px rgba(0,0,0,.45);"></div>
<svg class="b" style="left:1534px;top:495px;" width="20" height="22" viewBox="0 0 20 22"><path d="M3 1.2 L15.5 1.2 Q18.6 1.2 18.6 4.3 L18.6 15 L13 20.6 L3 20.6 Q1 20.6 1 18.4 L1 3.4 Q1 1.2 3 1.2 Z" fill="none" stroke="#a8a8a8" stroke-width="1.45"/><path d="M13 20.6 Q13 15.8 18.6 15" fill="none" stroke="#a8a8a8" stroke-width="1.3"/><line x1="5" y1="6.8" x2="14.5" y2="6.8" stroke="#a8a8a8" stroke-width="1.5"/><line x1="5" y1="10.3" x2="14.5" y2="10.3" stroke="#a8a8a8" stroke-width="1.5"/><line x1="5" y1="13.8" x2="11.5" y2="13.8" stroke="#a8a8a8" stroke-width="1.5"/></svg>
<svg class="b" style="left:1565px;top:493px;border-radius:3px;overflow:hidden" width="36" height="36" viewBox="0 0 36 36"><defs><filter id="av16"><feGaussianBlur stdDeviation="0.35"/></filter></defs><g filter="url(#av16)"><rect width="36" height="36" fill="#ffffff"/><path d="M16.4 7.3 Q21 7.5 23 8.7 Q25.5 12 26.2 15.3 Q26 17.5 25.3 18.9 Q24 21 21.7 22.4 Q19 24.5 16.4 25.1 Q13.5 23.5 12.8 21.6 Z" fill="#d6d6d6"/><path d="M19.9 15.3 Q23 14.8 26 16 Q25.8 19 24 21 Q21 23.5 18 24 Q18.5 19 19.9 15.3 Z" fill="#9a9a9a"/><path d="M21 12.5 Q22.5 11 23.5 12.5" fill="none" stroke="#222" stroke-width="1.2"/><path d="M7.5 12.7 Q7.8 7 9.2 5.6 Q12 2.6 16.4 2.4 Q20 2.4 21.7 3.8 L21.2 5.6 Q18 6.2 16.4 7.3 Q15.3 9.5 15.5 11.8 Q13.5 12.5 12.8 14.4 Q12.2 16.5 11.9 18.9 L10.1 20.7 Q8 20 7.5 18 Z" fill="#1c1c1c"/><ellipse cx="13.3" cy="15" rx="1.3" ry="1.8" fill="#cfcfcf"/><path d="M11.5 19 Q14 22 16 25.5" fill="none" stroke="#333" stroke-width="1.3"/><path d="M0 28.7 Q5 24 9.6 22 Q12 24 14.1 26 L24.4 26 Q26 25 27.5 24.2 Q30 25.5 31.5 27.8 L31.9 36 L0 36 Z" fill="#7a7a7a"/><path d="M0 30 Q4 26 8 24 L10 36 L0 36 Z" fill="#4a4a4a"/><path d="M4 36 L7 29 L9 36 Z" fill="#b0b0b0"/><path d="M26 27 Q29 26 30.5 28.5 L31 36 L27 36 Z" fill="#b8b8b8"/><path d="M14.6 26 L24.4 26 L23.5 36 L15.5 36 Z" fill="#141414"/></g></svg>
<div class="t" style="left:1609px;top:494.95px;font-size:13px;line-height:13px;color:#7c7c7c;letter-spacing:0.394px;">@ 2/12/2018 1:33 PM</div>
<div class="t" style="left:1609px;top:510.50px;font-size:19px;line-height:19px;color:#eeeeee;letter-spacing:0.111px;-webkit-text-stroke:0.3px #eee;">Andrew Sinagra</div>
<div class="t" style="left:1565px;top:538.19px;font-size:14px;line-height:14px;color:#e2e2e2;letter-spacing:0.806px;-webkit-text-stroke:0.25px #e2e2e2;">Make the explosion larger.</div>
<svg class="b" style="left:1875px;top:495px;" width="24" height="24" viewBox="0 0 24 24"><circle cx="12" cy="12" r="11" fill="none" stroke="#5a5a5a" stroke-width="1.6"/><path d="M5.2 11.8 L10 16.4 L18.8 7.6" fill="none" stroke="#e4e4e4" stroke-width="2.9"/></svg>
<svg class="b" style="left:1877px;top:531px;" width="25" height="18" viewBox="0 0 25 18"><path d="M9.5 0.5 L0.5 7.8 L9.5 15 L9.5 10.6 Q18.5 10 24.2 17.5 Q22 5.2 9.5 4.8 Z" fill="#606060"/></svg>
<svg class="b" style="left:1880px;top:557.6px;" width="18" height="18" viewBox="0 0 18 18"><path d="M10.4 3.6 L14.2 7.4 L4.8 16.8 L1 13 Z" fill="#606060"/><path d="M12 2 L13.6 0.4 L17.4 4.2 L15.8 5.8 Z" fill="#606060"/><path d="M0.6 13.6 L4.2 17.2 L0 17.9 Z" fill="#606060"/></svg>
<svg class="b" style="left:1879px;top:585px;" width="17" height="17" viewBox="0 0 17 17"><path d="M2.5 2.5 L14.5 14.5 M14.5 2.5 L2.5 14.5" stroke="#686868" stroke-width="4"/></svg>
<div class="b" style="left:1521px;top:633px;width:388px;height:1px;background:#525252;"></div>
<svg class="b" style="left:1564px;top:649px;" width="20" height="22" viewBox="0 0 20 22"><path d="M3 1.2 L15.5 1.2 Q18.6 1.2 18.6 4.3 L18.6 15 L13 20.6 L3 20.6 Q1 20.6 1 18.4 L1 3.4 Q1 1.2 3 1.2 Z" fill="none" stroke="#a8a8a8" stroke-width="1.45"/><path d="M13 20.6 Q13 15.8 18.6 15" fill="none" stroke="#a8a8a8" stroke-width="1.3"/><line x1="5" y1="6.8" x2="14.5" y2="6.8" stroke="#a8a8a8" stroke-width="1.5"/><line x1="5" y1="10.3" x2="14.5" y2="10.3" stroke="#a8a8a8" stroke-width="1.5"/><line x1="5" y1="13.8" x2="11.5" y2="13.8" stroke="#a8a8a8" stroke-width="1.5"/></svg>
<svg class="b" style="left:1595px;top:648px;border-radius:3px;overflow:hidden" width="36" height="36" viewBox="0 0 36 36"><defs><filter id="av17"><feGaussianBlur stdDeviation="0.35"/></filter></defs><g filter="url(#av17)"><rect width="36" height="36" fill="#ffffff"/><path d="M16.4 7.3 Q21 7.5 23 8.7 Q25.5 12 26.2 15.3 Q26 17.5 25.3 18.9 Q24 21 21.7 22.4 Q19 24.5 16.4 25.1 Q13.5 23.5 12.8 21.6 Z" fill="#d6d6d6"/><path d="M19.9 15.3 Q23 14.8 26 16 Q25.8 19 24 21 Q21 23.5 18 24 Q18.5 19 19.9 15.3 Z" fill="#9a9a9a"/><path d="M21 12.5 Q22.5 11 23.5 12.5" fill="none" stroke="#222" stroke-width="1.2"/><path d="M7.5 12.7 Q7.8 7 9.2 5.6 Q12 2.6 16.4 2.4 Q20 2.4 21.7 3.8 L21.2 5.6 Q18 6.2 16.4 7.3 Q15.3 9.5 15.5 11.8 Q13.5 12.5 12.8 14.4 Q12.2 16.5 11.9 18.9 L10.1 20.7 Q8 20 7.5 18 Z" fill="#1c1c1c"/><ellipse cx="13.3" cy="15" rx="1.3" ry="1.8" fill="#cfcfcf"/><path d="M11.5 19 Q14 22 16 25.5" fill="none" stroke="#333" stroke-width="1.3"/><path d="M0 28.7 Q5 24 9.6 22 Q12 24 14.1 26 L24.4 26 Q26 25 27.5 24.2 Q30 25.5 31.5 27.8 L31.9 36 L0 36 Z" fill="#7a7a7a"/><path d="M0 30 Q4 26 8 24 L10 36 L0 36 Z" fill="#4a4a4a"/><path d="M4 36 L7 29 L9 36 Z" fill="#b0b0b0"/><path d="M26 27 Q29 26 30.5 28.5 L31 36 L27 36 Z" fill="#b8b8b8"/><path d="M14.6 26 L24.4 26 L23.5 36 L15.5 36 Z" fill="#141414"/></g></svg>
<div class="t" style="left:1641px;top:648.45px;font-size:13px;line-height:13px;color:#7c7c7c;letter-spacing:0.394px;">@ 2/12/2018 1:33 PM</div>
<div class="t" style="left:1641px;top:663.00px;font-size:19px;line-height:19px;color:#eeeeee;letter-spacing:0.119px;-webkit-text-stroke:0.3px #eee;">Andrew Sinagra</div>
<div class="t" style="left:1595px;top:693.39px;font-size:14px;line-height:14px;color:#e2e2e2;letter-spacing:0.774px;-webkit-text-stroke:0.25px #e2e2e2;">I made it 20% larger!</div>
<svg class="b" style="left:1877px;top:649.8px;" width="24" height="24" viewBox="0 0 24 24"><circle cx="12" cy="12" r="11" fill="none" stroke="#5a5a5a" stroke-width="1.6"/><path d="M5.2 11.8 L10 16.4 L18.8 7.6" fill="none" stroke="#e4e4e4" stroke-width="2.9"/></svg>
<svg class="b" style="left:1882px;top:681px;" width="18" height="18" viewBox="0 0 18 18"><path d="M10.4 3.6 L14.2 7.4 L4.8 16.8 L1 13 Z" fill="#606060"/><path d="M12 2 L13.6 0.4 L17.4 4.2 L15.8 5.8 Z" fill="#606060"/><path d="M0.6 13.6 L4.2 17.2 L0 17.9 Z" fill="#606060"/></svg>
<svg class="b" style="left:1881px;top:708.5px;" width="17" height="17" viewBox="0 0 17 17"><path d="M2.5 2.5 L14.5 14.5 M14.5 2.5 L2.5 14.5" stroke="#686868" stroke-width="4"/></svg>
<div class="b" style="left:1521px;top:757px;width:388px;height:1px;background:#525252;"></div>
<svg class="b" style="left:1564px;top:773px;" width="20" height="22" viewBox="0 0 20 22"><path d="M3 1.2 L15.5 1.2 Q18.6 1.2 18.6 4.3 L18.6 15 L13 20.6 L3 20.6 Q1 20.6 1 18.4 L1 3.4 Q1 1.2 3 1.2 Z" fill="none" stroke="#a8a8a8" stroke-width="1.45"/><path d="M13 20.6 Q13 15.8 18.6 15" fill="none" stroke="#a8a8a8" stroke-width="1.3"/><line x1="5" y1="6.8" x2="14.5" y2="6.8" stroke="#a8a8a8" stroke-width="1.5"/><line x1="5" y1="10.3" x2="14.5" y2="10.3" stroke="#a8a8a8" stroke-width="1.5"/><line x1="5" y1="13.8" x2="11.5" y2="13.8" stroke="#a8a8a8" stroke-width="1.5"/></svg>
<svg class="b" style="left:1595px;top:774px;" width="36" height="34" viewBox="0 0 36 34"><ellipse cx="18" cy="9.5" rx="7.2" ry="9" fill="#232323"/><path d="M0.5 33.5 Q0.5 22 10 20 Q18 26 26 20 Q35.5 22 35.5 33.5 Z" fill="#232323"/></svg>
<div class="t" style="left:1641px;top:771.75px;font-size:13px;line-height:13px;color:#7c7c7c;letter-spacing:0.424px;">@ 10/26/2018 3:17 PM</div>
<div class="t" style="left:1641px;top:787.60px;font-size:19px;line-height:19px;color:#eeeeee;letter-spacing:0.334px;-webkit-text-stroke:0.3px #eee;">Kyle Okaly</div>
<div class="t" style="left:1595px;top:817.49px;font-size:14px;line-height:14px;color:#e2e2e2;letter-spacing:0.908px;-webkit-text-stroke:0.25px #e2e2e2;">I'm replying to this.</div>
<svg class="b" style="left:1877px;top:774px;" width="24" height="24" viewBox="0 0 24 24"><circle cx="12" cy="12" r="11" fill="none" stroke="#5a5a5a" stroke-width="1.6"/></svg>
<svg class="b" style="left:1882px;top:805px;" width="18" height="18" viewBox="0 0 18 18"><path d="M10.4 3.6 L14.2 7.4 L4.8 16.8 L1 13 Z" fill="#606060"/><path d="M12 2 L13.6 0.4 L17.4 4.2 L15.8 5.8 Z" fill="#606060"/><path d="M0.6 13.6 L4.2 17.2 L0 17.9 Z" fill="#606060"/></svg>
<svg class="b" style="left:1881px;top:832px;" width="17" height="17" viewBox="0 0 17 17"><path d="M2.5 2.5 L14.5 14.5 M14.5 2.5 L2.5 14.5" stroke="#686868" stroke-width="4"/></svg>
</body></html>
